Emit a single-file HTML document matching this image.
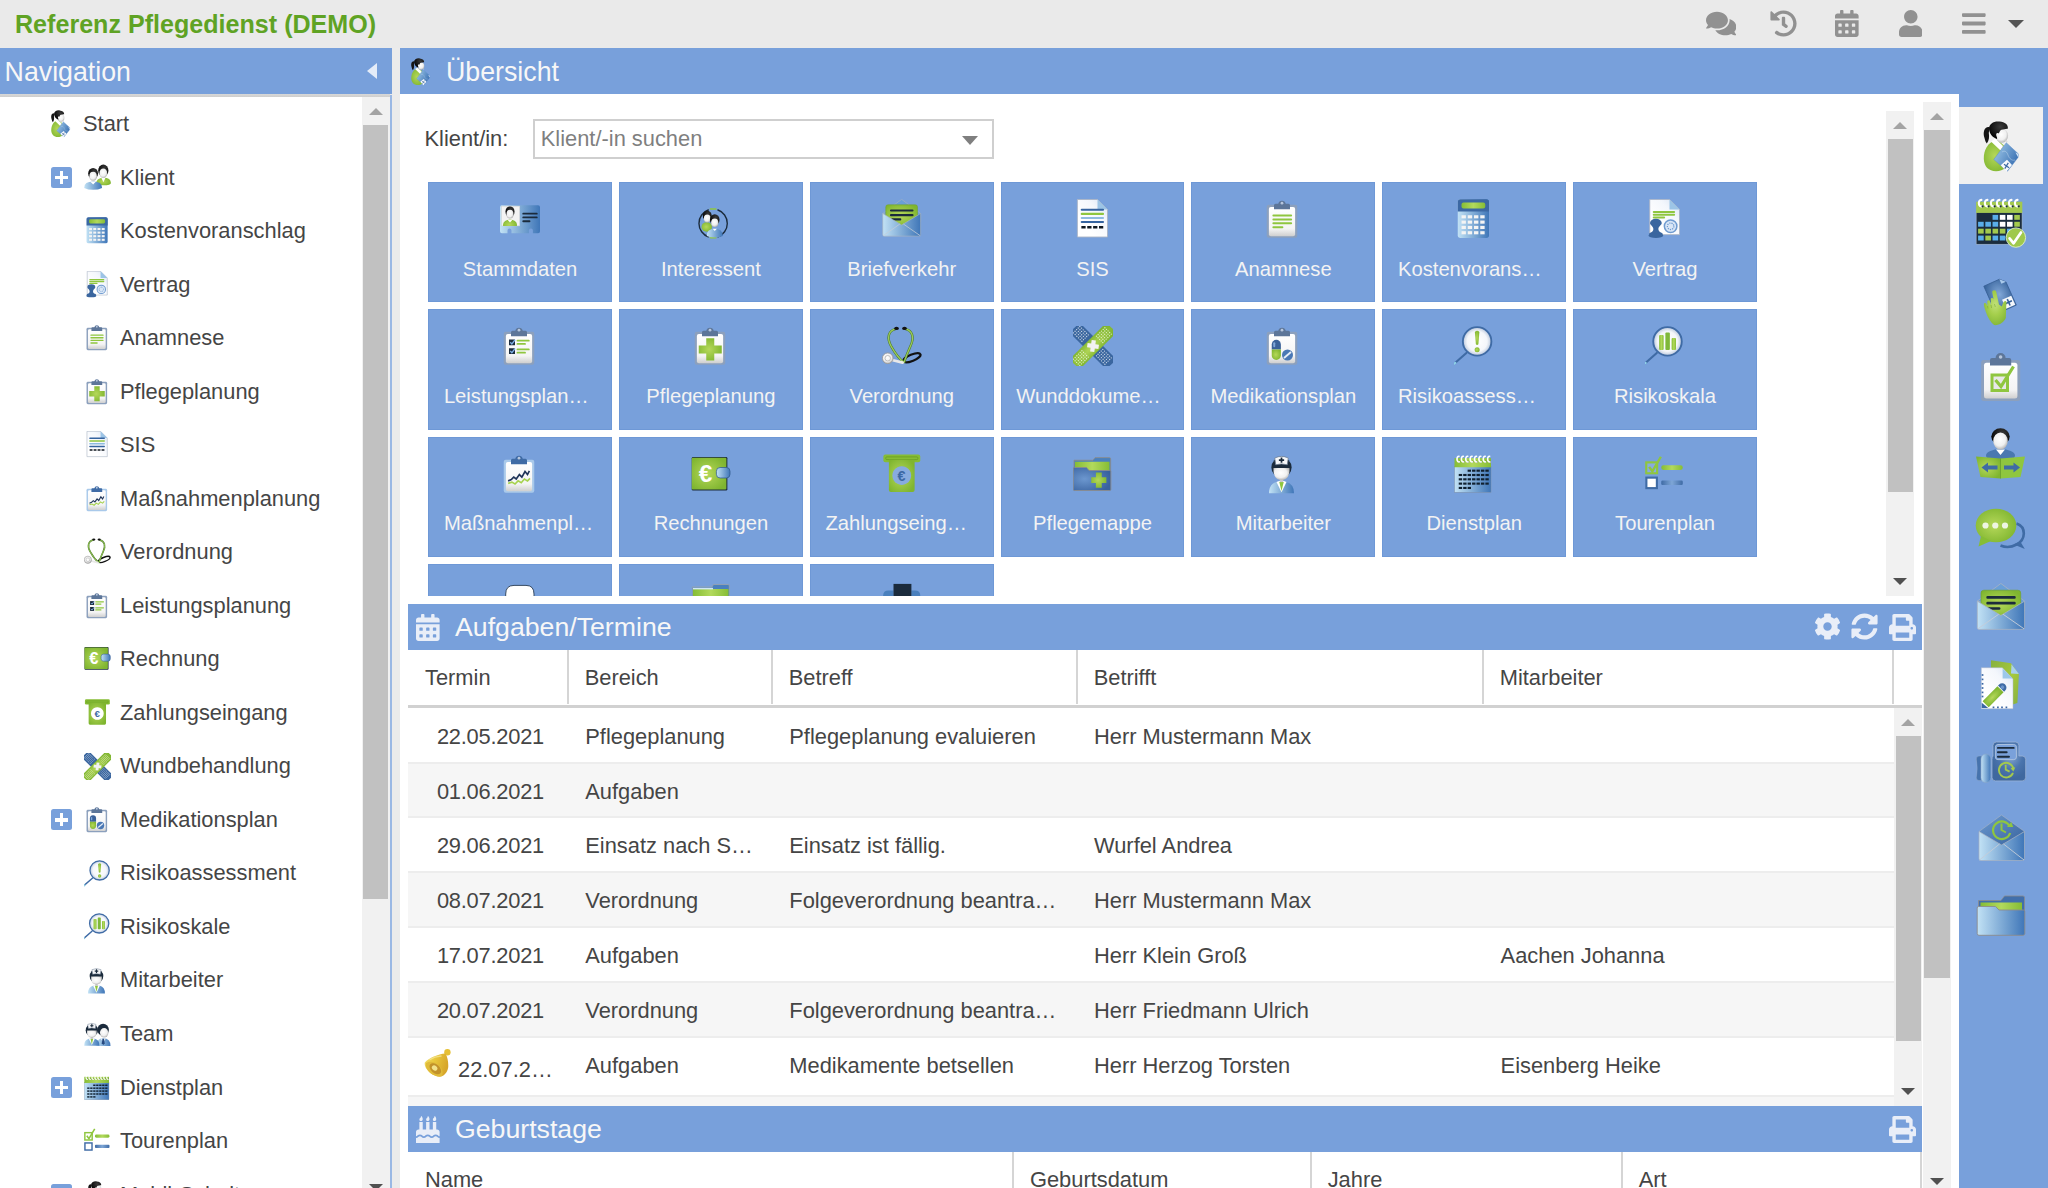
<!DOCTYPE html><html><head><meta charset="utf-8"><title>Referenz Pflegedienst</title><style>
*{box-sizing:border-box;margin:0;padding:0}
html,body{width:2048px;height:1188px;overflow:hidden;background:#ebebeb;font-family:"Liberation Sans",sans-serif;color:#454545;font-size:21.85px}
.abs{position:absolute}
#top{position:absolute;left:0;top:0;width:2048px;height:48px;background:#eaeaea}
#title{position:absolute;left:15px;top:7px;font-weight:bold;font-size:25.1px;line-height:34px;color:#5fa324;white-space:nowrap}
.hdr{position:absolute;background:#78a0db;color:#f7f7f7;font-size:26.75px;white-space:nowrap}
.hdr .t{position:absolute;top:0;line-height:49.4px}
#nav{position:absolute;left:0;top:94px;width:390px;height:1094px;background:#fff;overflow:hidden}
#navshadow{position:absolute;left:0;top:94px;width:390px;height:3px;background:linear-gradient(#d8d8d8,#cecece)}
.row{position:absolute;left:0;width:362px;height:53.53px}
.row .tx{position:absolute;top:0;line-height:54.2px;white-space:nowrap}
.row svg.ic{position:absolute;width:27px;height:27px}
.plus{position:absolute;left:51px;width:21px;height:21px;background:#78a0db;border-radius:2.5px}
.plus:before{content:"";position:absolute;left:3.9px;top:8.5px;width:13.2px;height:3.8px;background:#fff}
.plus:after{content:"";position:absolute;left:8.6px;top:3.8px;width:3.8px;height:13.2px;background:#fff}
.sb{position:absolute;background:#f1f1f1}
.sb .th{position:absolute;background:#c1c1c1}
.sb .up,.sb .dn{position:absolute;width:0;height:0;border-left:7px solid transparent;border-right:7px solid transparent}
.sb .up{border-bottom:7px solid #a3a3a3}
.sb .dn{border-top:7px solid #505050}
#main{position:absolute;left:400px;top:94px;width:1559px;height:1094px;background:#fff;overflow:hidden}
#tb{position:absolute;left:1959px;top:94px;width:89px;height:1094px;background:#78a0db}
.tile{position:absolute;width:183.8px;height:120.4px;background:#78a0db;border:1px solid #6e98d6;color:#f3f3f3;font-size:20.2px;text-align:center}
.tile svg{position:absolute;left:71px;top:16.2px;width:40px;height:40px}
.tile .l{position:absolute;left:0;width:182px;top:70.6px;line-height:30px;white-space:nowrap}
.sec{position:absolute;left:8px;width:1514px;height:46px;background:#78a0db;color:#f7f7f7;font-size:26.7px}
.sec .t{position:absolute;left:47px;top:0;line-height:47.4px;white-space:nowrap}
.th{position:absolute;white-space:nowrap}
.gh{position:absolute;left:8px;width:1514px;height:57.6px;background:#fff;border-bottom:3.6px solid #d1d1d1}
.gh .c{position:absolute;top:0;height:54px;line-height:55px;border-right:2px solid #d5d5d5;padding-left:17px;white-space:nowrap}
.gr{position:absolute;left:8px;width:1486px;height:54.83px;border-bottom:2px solid #ededed;background:#fff}
.gr.alt{background:#f6f6f6}
.gr .c{position:absolute;top:0;line-height:56px;white-space:nowrap}
</style></head><body><svg width="0" height="0" style="position:absolute"><defs>
<linearGradient id="gB" x1="0" y1="0" x2="1" y2="0"><stop offset="0" stop-color="#c2e2f5"/><stop offset="1" stop-color="#3f76b8"/></linearGradient>
<linearGradient id="gBd" x1="0" y1="0" x2="1" y2="1"><stop offset="0" stop-color="#6d9bd2"/><stop offset="1" stop-color="#345f99"/></linearGradient>
<linearGradient id="gP" x1="0" y1="0" x2="0" y2="1"><stop offset="0" stop-color="#ffffff"/><stop offset=".75" stop-color="#f4f4f4"/><stop offset="1" stop-color="#cfcfcf"/></linearGradient>
<linearGradient id="gD" x1="1" y1="0" x2=".3" y2=".75"><stop offset="0" stop-color="#d6e2f4"/><stop offset=".45" stop-color="#f4f7fc"/><stop offset="1" stop-color="#ffffff"/></linearGradient>
<radialGradient id="gG" cx=".45" cy=".5" r=".6"><stop offset="0" stop-color="#b5d85a"/><stop offset="1" stop-color="#7fb52f"/></radialGradient>
<linearGradient id="gGl" x1="0" y1="0" x2="1" y2="0"><stop offset="0" stop-color="#86bd35"/><stop offset=".5" stop-color="#b2d95c"/><stop offset="1" stop-color="#86bd35"/></linearGradient>
<radialGradient id="gF" cx=".45" cy=".4" r=".65"><stop offset="0" stop-color="#ffffff"/><stop offset=".6" stop-color="#f0f0f0"/><stop offset="1" stop-color="#a8a8a8"/></radialGradient>
<radialGradient id="gL" cx=".5" cy=".5" r=".5"><stop offset="0" stop-color="#ffffff"/><stop offset=".7" stop-color="#f4f6fa"/><stop offset="1" stop-color="#b9c7dc"/></radialGradient>
<radialGradient id="gH" cx=".6" cy=".3" r=".7"><stop offset="0" stop-color="#3a3a3a"/><stop offset="1" stop-color="#000"/></radialGradient>
<linearGradient id="gBv" x1="0" y1="0" x2="0" y2="1"><stop offset="0" stop-color="#8fc0e6"/><stop offset="1" stop-color="#3f76b8"/></linearGradient>
<radialGradient id="gGold" cx=".4" cy=".4" r=".7"><stop offset="0" stop-color="#ffe27a"/><stop offset=".6" stop-color="#e9b52a"/><stop offset="1" stop-color="#b98414"/></radialGradient>
</defs></svg>
<div id="top"><div id="title">Referenz Pflegedienst (DEMO)</div><svg style="position:absolute;left:1705.7px;top:9.7px;width:30.38px;height:27px" viewBox="0 0 576 512"><path fill="#919191" d="M416 192c0-88.400-93.100-160-208-160S0 103.600 0 192c0 34.300 14.100 65.900 38 92-13.400 30.200-35.500 54.200-35.800 54.500-2.200 2.300-2.800 5.700-1.500 8.700S4.800 352 8 352c36.600 0 66.900-12.300 88.700-25 32.200 15.700 70.300 25 111.300 25 114.900 0 208-71.600 208-160zm122 220c23.900-26 38-57.700 38-92 0-66.900-53.500-124.200-129.300-148.100.9 6.600 1.300 13.300 1.300 20.100 0 105.900-107.700 192-240 192-10.800 0-21.300-.8-31.700-1.900C207.800 439.600 281.800 480 368 480c41 0 79.100-9.200 111.300-25 21.800 12.700 52.100 25 88.700 25 3.200 0 6.100-1.900 7.300-4.800 1.300-2.900.7-6.300-1.500-8.700-.3-.3-22.400-24.200-35.800-54.500z"/></svg><svg style="position:absolute;left:1769.6px;top:9.7px;width:27.00px;height:27px" viewBox="0 0 512 512"><path fill="#919191" d="M504 255.531c.253 136.640-111.180 248.372-247.820 248.468-59.015.042-113.223-20.530-155.822-54.911-11.077-8.940-11.905-25.541-1.839-35.607l11.267-11.267c8.609-8.609 22.353-9.551 31.891-1.984C173.062 425.135 212.781 440 256 440c101.705 0 184-82.311 184-184 0-101.705-82.311-184-184-184-48.814 0-93.149 18.969-126.068 49.932l50.754 50.754c10.080 10.080 2.941 27.314-11.313 27.314H24c-8.837 0-16-7.163-16-16V38.627c0-14.254 17.234-21.393 27.314-11.314l49.372 49.372C129.209 34.136 189.552 8 256 8c136.810 0 247.747 110.780 248 247.531zm-180.912 78.784l9.823-12.630c8.138-10.463 6.253-25.542-4.210-33.679L288 256.349V152c0-13.255-10.745-24-24-24h-16c-13.255 0-24 10.745-24 24v135.651l65.409 50.874c10.463 8.137 25.541 6.253 33.679-4.210z"/></svg><svg style="position:absolute;left:1835.1px;top:9.9px;width:23.62px;height:27px" viewBox="0 0 448 512"><path fill="#919191" d="M0 464c0 26.500 21.500 48 48 48h352c26.500 0 48-21.500 48-48V192H0v272zm320-196c0-6.600 5.400-12 12-12h40c6.600 0 12 5.400 12 12v40c0 6.600-5.400 12-12 12h-40c-6.600 0-12-5.400-12-12v-40zm0 128c0-6.600 5.400-12 12-12h40c6.600 0 12 5.400 12 12v40c0 6.600-5.400 12-12 12h-40c-6.600 0-12-5.400-12-12v-40zM192 268c0-6.600 5.400-12 12-12h40c6.600 0 12 5.400 12 12v40c0 6.600-5.400 12-12 12h-40c-6.600 0-12-5.400-12-12v-40zm0 128c0-6.600 5.400-12 12-12h40c6.600 0 12 5.400 12 12v40c0 6.600-5.400 12-12 12h-40c-6.600 0-12-5.400-12-12v-40zM64 268c0-6.600 5.400-12 12-12h40c6.600 0 12 5.400 12 12v40c0 6.600-5.400 12-12 12H76c-6.600 0-12-5.400-12-12v-40zm0 128c0-6.600 5.400-12 12-12h40c6.600 0 12 5.400 12 12v40c0 6.600-5.400 12-12 12H76c-6.600 0-12-5.400-12-12v-40zM400 64h-48V16c0-8.800-7.200-16-16-16h-32c-8.800 0-16 7.200-16 16v48H160V16c0-8.800-7.200-16-16-16h-32c-8.800 0-16 7.200-16 16v48H48C21.500 64 0 85.500 0 112v48h448v-48c0-26.500-21.500-48-48-48z"/></svg><svg style="position:absolute;left:1898.6px;top:9.9px;width:23.62px;height:27px" viewBox="0 0 448 512"><path fill="#919191" d="M224 256c70.700 0 128-57.300 128-128S294.700 0 224 0 96 57.300 96 128s57.300 128 128 128zm89.600 32h-16.700c-22.200 10.200-46.900 16-72.900 16s-50.600-5.800-72.900-16h-16.700C60.200 288 0 348.200 0 422.400V464c0 26.500 21.500 48 48 48h352c26.500 0 48-21.500 48-48v-41.600c0-74.200-60.200-134.400-134.400-134.400z"/></svg><svg style="position:absolute;left:1962px;top:9.9px;width:23.62px;height:27px" viewBox="0 0 448 512"><path fill="#919191" d="M16 132h416c8.837 0 16-7.163 16-16V76c0-8.837-7.163-16-16-16H16C7.163 60 0 67.163 0 76v40c0 8.837 7.163 16 16 16zm0 160h416c8.837 0 16-7.163 16-16v-40c0-8.837-7.163-16-16-16H16c-8.837 0-16 7.163-16 16v40c0 8.837 7.163 16 16 16zm0 160h416c8.837 0 16-7.163 16-16v-40c0-8.837-7.163-16-16-16H16c-8.837 0-16 7.163-16 16v40c0 8.837 7.163 16 16 16z"/></svg><div class="abs" style="left:2007.8px;top:20.2px;width:0;height:0;border-left:8px solid transparent;border-right:8px solid transparent;border-top:8.700px solid #555"></div></div>
<div class="hdr" style="left:0;top:48px;width:391.5px;height:46px"><div class="t" style="left:4.6px">Navigation</div><div class="abs" style="left:367px;top:15px;width:0;height:0;border-top:8px solid transparent;border-bottom:8px solid transparent;border-right:10px solid #e4ecf8"></div></div>
<div class="hdr" style="left:400px;top:48px;width:1648px;height:46px"><svg class="" style="position:absolute;left:5.5px;top:9.3px;width:29px;height:29px" viewBox="0 0 54 54"><path d="M15.500 8C10.500 7 8.500 13 10.500 19C11.200 21.500 11.500 23 12.800 24.500C15 22 15.500 18 14.800 14z" fill="#151515"/><path d="M21 21.500C14 23.500 9.500 31 9.800 40C10.200 47.500 14.500 52.200 22 52.200C30 52.200 34.500 47 34.500 40C34.500 30 29 23 21 21.500z" fill="url(#gG)"/><path d="M17 22.500L21.500 19.500L29 27L26.500 31.500z" fill="#fff"/><path d="M26.500 31.500L29 27L31 28.500z" fill="#e6e6e6"/><ellipse cx="27.800" cy="16.800" rx="6.300" ry="7" fill="url(#gF)"/><path d="M31 21.500l3 .8-1.500 1.500z" fill="#ddd"/><path d="M15 10C15 4.500 20 2 25.500 2.600C31 3 34.500 6 33.800 9.800C32 9.500 30 10.500 27.500 10.800C26 11 25.800 13.500 24.500 14.500C23 13.500 21.800 14.500 22.300 16.500C22.600 17.800 23.500 18.500 23 20C20 19 15.500 16 15 10z" fill="url(#gH)"/><linearGradient id="gSd" x1="0" y1="0" x2="1" y2=".6"><stop offset="0" stop-color="#a7d0ee"/><stop offset="1" stop-color="#3a70b2"/></linearGradient><path d="M32.300 23.800L44.500 35L44 38.500L33.500 52.200L19.800 40.500z" fill="url(#gSd)" stroke="#5f8fca" stroke-width=".5"/><path d="M41.500 33.500l3 1.500-.5 3z" fill="#d5e6f6"/><path d="M26.700 46.300L33 40.800L38 46L32.500 52.600z" fill="#f7f9fc"/><path d="M30 45.200l5 3.500M34.300 43.800l-3.500 5.800" stroke="#3f6ba5" stroke-width="1.300"/><path d="M28 33C31 31 33 33 34 36C35.500 40 38 42 41 41" fill="none" stroke="#d5e6f6" stroke-width=".5" stroke-opacity=".8"/></svg><div class="t" style="left:46px">Übersicht</div></div>
<div id="nav">
<div class="row" style="top:3.00px"><svg class="ic" style="left:46.0px;top:12.4px;width:29px;height:29px" viewBox="0 0 54 54"><path d="M15.500 8C10.500 7 8.500 13 10.500 19C11.200 21.500 11.500 23 12.800 24.500C15 22 15.500 18 14.800 14z" fill="#151515"/><path d="M21 21.500C14 23.500 9.500 31 9.800 40C10.200 47.500 14.500 52.200 22 52.200C30 52.200 34.500 47 34.500 40C34.500 30 29 23 21 21.500z" fill="url(#gG)"/><path d="M17 22.500L21.500 19.500L29 27L26.500 31.500z" fill="#fff"/><path d="M26.500 31.500L29 27L31 28.500z" fill="#e6e6e6"/><ellipse cx="27.800" cy="16.800" rx="6.300" ry="7" fill="url(#gF)"/><path d="M31 21.500l3 .8-1.500 1.500z" fill="#ddd"/><path d="M15 10C15 4.500 20 2 25.500 2.600C31 3 34.500 6 33.800 9.800C32 9.500 30 10.500 27.500 10.800C26 11 25.800 13.500 24.500 14.500C23 13.500 21.800 14.500 22.300 16.500C22.600 17.800 23.500 18.500 23 20C20 19 15.500 16 15 10z" fill="url(#gH)"/><linearGradient id="gSd" x1="0" y1="0" x2="1" y2=".6"><stop offset="0" stop-color="#a7d0ee"/><stop offset="1" stop-color="#3a70b2"/></linearGradient><path d="M32.300 23.800L44.500 35L44 38.500L33.500 52.200L19.800 40.500z" fill="url(#gSd)" stroke="#5f8fca" stroke-width=".5"/><path d="M41.500 33.500l3 1.500-.5 3z" fill="#d5e6f6"/><path d="M26.700 46.300L33 40.800L38 46L32.500 52.600z" fill="#f7f9fc"/><path d="M30 45.200l5 3.500M34.300 43.800l-3.500 5.800" stroke="#3f6ba5" stroke-width="1.300"/><path d="M28 33C31 31 33 33 34 36C35.500 40 38 42 41 41" fill="none" stroke="#d5e6f6" stroke-width=".5" stroke-opacity=".8"/></svg><div class="tx" style="left:83px">Start</div></div>
<div class="row" style="top:56.53px"><div class="plus" style="top:16.5px"></div><svg class="ic" style="left:83.7px;top:13.2px" viewBox="0 0 32 32"><path d="M14.200 24.500Q14.200 16.300 23 16.300Q31.900 16.300 31.900 22.500Q31.900 25.300 23 25.300z" fill="url(#gG)"/><path d="M20.600 16.500L23 21.500L25.400 16.500z" fill="#fff"/><ellipse cx="22.9" cy="7.800000000000001" rx="6.05" ry="7.17" fill="url(#gH)"/><ellipse cx="22.9" cy="10.95" rx="4.64" ry="5.76" fill="url(#gF)"/><path d="M0.200 28.300Q0.200 20.800 10.800 20.800Q21.400 20.800 21.400 28.300Q17 30.600 10.800 30.600Q4.600 30.600 0.200 28.300z" fill="url(#gB)"/><path d="M7.600 21L10.800 24.300L14 21z" fill="#fff"/><ellipse cx="10.8" cy="11.2" rx="5.82" ry="6.50" fill="url(#gH)"/><ellipse cx="10.8" cy="14.54" rx="4.47" ry="5.22" fill="url(#gF)"/></svg><div class="tx" style="left:120px">Klient</div></div>
<div class="row" style="top:110.06px"><svg class="ic" style="left:83.7px;top:13.2px" viewBox="0 0 32 32"><rect x="3" y="0.2" width="25" height="31" rx="2.2" fill="url(#gB)"/><path d="M3 10V2.4q0-2.2 2.2-2.2h20.6q2.2 0 2.2 2.2V10z" fill="#3c68a3"/><rect x="6" y="2.8" width="19" height="4.8" rx="1.6" fill="url(#gGl)"/><rect x="6.0" y="13.00" width="3.5" height="2.5" fill="#f4f4f4"/><rect x="11.0" y="13.00" width="3.5" height="2.5" fill="#f4f4f4"/><rect x="16.0" y="13.00" width="3.5" height="2.5" fill="#f4f4f4"/><rect x="21.0" y="13.00" width="3.5" height="2.5" fill="#f4f4f4"/><rect x="6.0" y="17.25" width="3.5" height="2.5" fill="#f4f4f4"/><rect x="11.0" y="17.25" width="3.5" height="2.5" fill="#f4f4f4"/><rect x="16.0" y="17.25" width="3.5" height="2.5" fill="#f4f4f4"/><rect x="21.0" y="17.25" width="3.5" height="2.5" fill="#f4f4f4"/><rect x="6.0" y="21.50" width="3.5" height="2.5" fill="#f4f4f4"/><rect x="11.0" y="21.50" width="3.5" height="2.5" fill="#f4f4f4"/><rect x="16.0" y="21.50" width="3.5" height="2.5" fill="#f4f4f4"/><rect x="21.0" y="21.50" width="3.5" height="2.5" fill="#f4f4f4"/><rect x="6.0" y="25.75" width="3.5" height="2.5" fill="#f4f4f4"/><rect x="11.0" y="25.75" width="3.5" height="2.5" fill="#f4f4f4"/><rect x="16.0" y="25.75" width="3.5" height="2.5" fill="#f4f4f4"/><rect x="21.0" y="25.75" width="3.5" height="2.5" fill="#f4f4f4"/></svg><div class="tx" style="left:120px">Kostenvoranschlag</div></div>
<div class="row" style="top:163.59px"><svg class="ic" style="left:83.7px;top:13.2px" viewBox="0 0 32 32"><path d="M3.8 0.3H19.6L27.6 8.3V28.5H3.8z" fill="url(#gD)" stroke="#aab4c4" stroke-width=".7"/><path d="M19.6 0.3V8.3H27.6z" fill="#9cc4e6"/><path d="M7 10.3H23.3" stroke="#8fc63f" stroke-width="1.6" stroke-linecap="round"/><path d="M7 12.5H23.3" stroke="#8fc63f" stroke-width="1.6" stroke-linecap="round"/><path d="M7 14.7H15.3" stroke="#8fc63f" stroke-width="1.6" stroke-linecap="round"/><circle cx="20.5" cy="21.8" r="5" fill="#d9e6f6" stroke="#6f9bd0" stroke-width="1.2"/><circle cx="20.5" cy="21.8" r="2.6" fill="none" stroke="#6f9bd0" stroke-width="1" stroke-dasharray="1 .8"/><path d="M4 19.2a4.7 3.4 0 0 1 9.400 0c0 1.800-2.700 2.300-2.700 5c0 1.600 1.500 2.600 3.300 3.200v1.400H3.400v-1.400c1.800-.6 3.300-1.600 3.300-3.200c0-2.700-2.700-3.200-2.700-5z" fill="#3a669f"/><ellipse cx="8.700" cy="29.200" rx="5.900" ry="2" fill="#3a669f"/></svg><div class="tx" style="left:120px">Vertrag</div></div>
<div class="row" style="top:217.12px"><svg class="ic" style="left:83.7px;top:13.2px" viewBox="0 0 32 32"><rect x="3" y="4.5" width="24.4" height="26.5" rx="1.6" fill="#8ca0bd"/><rect x="4.7" y="6.3" width="21" height="23.4" rx="1.6" fill="url(#gP)"/><path d="M8.8 8.2V5q0-1.2 1.2-1.2h2.2a3.1 3.1 0 0 1 6 0h2.2q1.2 0 1.2 1.2V8.2z" fill="#5d7699"/><circle cx="15.2" cy="3.3" r="1.1" fill="#b7c6dc"/><path d="M8.3 13.2H22.5" stroke="#8fc63f" stroke-width="1.6" stroke-linecap="round"/><path d="M8.3 16.3H22.5" stroke="#8fc63f" stroke-width="1.6" stroke-linecap="round"/><path d="M8.3 19.4H22.5" stroke="#8fc63f" stroke-width="1.6" stroke-linecap="round"/><path d="M8.3 22.5H15.5" stroke="#8fc63f" stroke-width="1.6" stroke-linecap="round"/></svg><div class="tx" style="left:120px">Anamnese</div></div>
<div class="row" style="top:270.65px"><svg class="ic" style="left:83.7px;top:13.2px" viewBox="0 0 32 32"><rect x="3" y="4.5" width="24.4" height="26.5" rx="1.6" fill="#8ca0bd"/><rect x="4.7" y="6.3" width="21" height="23.4" rx="1.6" fill="url(#gP)"/><path d="M8.8 8.2V5q0-1.2 1.2-1.2h2.2a3.1 3.1 0 0 1 6 0h2.2q1.2 0 1.2 1.2V8.2z" fill="#5d7699"/><circle cx="15.2" cy="3.3" r="1.1" fill="#b7c6dc"/><path d="M12.2 9.8h6.4v5.7h6v6.4h-6v5.7h-6.4v-5.7h-6v-6.4h6z" fill="url(#gG)"/></svg><div class="tx" style="left:120px">Pflegeplanung</div></div>
<div class="row" style="top:324.18px"><svg class="ic" style="left:83.7px;top:13.2px" viewBox="0 0 32 32"><path d="M3.5 0.4H19.6L27.6 8.4V30.4H3.5z" fill="url(#gD)" stroke="#aab4c4" stroke-width=".7"/><path d="M19.6 0.4V8.4H27.6z" fill="#9cc4e6"/><path d="M7 8.6H24" stroke="#35639f" stroke-width="1.7" stroke-linecap="round"/><path d="M7 11.9H24" stroke="#8fc63f" stroke-width="1.7" stroke-linecap="round"/><path d="M7 15.2H24" stroke="#8ebbe0" stroke-width="1.7" stroke-linecap="round"/><path d="M7 18.4H24" stroke="#35639f" stroke-width="1.7" stroke-linecap="round"/><path d="M6.7 22.6h3.4M11.4 22.6h3.4M16.1 22.6h3.4M20.8 22.6h3.4" stroke="#101820" stroke-width="1.9"/></svg><div class="tx" style="left:120px">SIS</div></div>
<div class="row" style="top:377.71px"><svg class="ic" style="left:83.7px;top:13.2px" viewBox="0 0 32 32"><rect x="3" y="4.5" width="24.4" height="26.5" rx="1.6" fill="#a9c9ea"/><rect x="4.7" y="6.3" width="21" height="23.4" rx="1.6" fill="url(#gP)"/><path d="M8.8 8.2V5q0-1.2 1.2-1.2h2.2a3.1 3.1 0 0 1 6 0h2.2q1.2 0 1.2 1.2V8.2z" fill="#3f6ba5"/><circle cx="15.2" cy="3.3" r="1.1" fill="#b7c6dc"/><path d="M6.5 21.5l2.5-1 2-2 2 1.5 2.5-3.5 2 2 2.5-4.5 2 2.5 1.5-3" stroke="#1e3358" stroke-width="1.3" fill="none"/><path d="M6.5 23.5l3-1 2.5 1.5 2.5-2.5 2.5 1.5 2.5-3 2.5 1.5 2-2" stroke="#a6d24e" stroke-width="1.3" fill="none"/></svg><div class="tx" style="left:120px">Maßnahmenplanung</div></div>
<div class="row" style="top:431.24px"><svg class="ic" style="left:83.7px;top:13.2px" viewBox="0 0 32 32"><ellipse cx="24" cy="25.400" rx="7.300" ry="2.500" transform="rotate(-22 24 25.400)" fill="none" stroke="#111" stroke-width="1.700"/><path d="M11.200 2.300C5 3.500 3.500 9.500 7.500 16.500C10 21 13.500 26 17.600 29.300M18.400 2.300C24.600 3.500 26 9.500 22.800 16C21 20 19 25 17.600 29.300" fill="none" stroke="#4c7a2a" stroke-width="1.900"/><path d="M11.200 2.300C5 3.500 3.500 9.500 7.500 16.500C10 21 13.500 26 17.600 29.300M18.400 2.300C24.600 3.500 26 9.500 22.800 16C21 20 19 25 17.600 29.300" fill="none" stroke="#9ccc5a" stroke-width="1"/><ellipse cx="11.600" cy="1.900" rx="1.900" ry="1.300" fill="#111"/><ellipse cx="18" cy="1.900" rx="1.900" ry="1.300" fill="#111"/><path d="M8 27.200L16.500 29.300" stroke="#e8e8e8" stroke-width="2.200" stroke-linecap="round"/><circle cx="4.600" cy="25.800" r="4.300" fill="url(#gF)" stroke="#9a9a9a" stroke-width=".7"/><circle cx="4.600" cy="25.800" r="2.200" fill="none" stroke="#b5b5b5" stroke-width=".7"/></svg><div class="tx" style="left:120px">Verordnung</div></div>
<div class="row" style="top:484.77px"><svg class="ic" style="left:83.7px;top:13.2px" viewBox="0 0 32 32"><rect x="3" y="4.5" width="24.4" height="26.5" rx="1.6" fill="#8ca0bd"/><rect x="4.7" y="6.3" width="21" height="23.4" rx="1.6" fill="url(#gP)"/><path d="M8.8 8.2V5q0-1.2 1.2-1.2h2.2a3.1 3.1 0 0 1 6 0h2.2q1.2 0 1.2 1.2V8.2z" fill="#5d7699"/><circle cx="15.2" cy="3.3" r="1.1" fill="#b7c6dc"/><rect x="7.2" y="10.8" width="4.8" height="4.6" fill="#1b2b3c"/><rect x="7.2" y="17.8" width="4.8" height="4.6" fill="#1b2b3c"/><path d="M8.2 13l1.3 1.4 2.6-3.4" stroke="#7fb0e6" stroke-width="1" fill="none"/><path d="M8.2 20l1.3 1.4 2.6-3.4" stroke="#7fb0e6" stroke-width="1" fill="none"/><path d="M14 11.7H23" stroke="#8fc63f" stroke-width="1.5" stroke-linecap="round"/><path d="M14 14.3H20" stroke="#8fc63f" stroke-width="1.5" stroke-linecap="round"/><path d="M14 18.7H23" stroke="#8fc63f" stroke-width="1.5" stroke-linecap="round"/><path d="M14 21.3H20" stroke="#8fc63f" stroke-width="1.5" stroke-linecap="round"/></svg><div class="tx" style="left:120px">Leistungsplanung</div></div>
<div class="row" style="top:538.30px"><svg class="ic" style="left:83.7px;top:13.2px" viewBox="0 0 32 32"><rect x="0.600" y="2.300" width="28.500" height="26.900" rx="1" fill="#1b2b3c"/><rect x="0.600" y="3" width="27.700" height="25.400" rx=".8" fill="url(#gG)"/><rect x="20.300" y="10.800" width="10.900" height="8.400" rx="3" fill="url(#gB)" stroke="#2f588f" stroke-width=".6"/><text x="11.600" y="22.400" font-family="Liberation Sans" font-weight="bold" font-size="19.500" fill="#fff" text-anchor="middle">€</text></svg><div class="tx" style="left:120px">Rechnung</div></div>
<div class="row" style="top:591.83px"><svg class="ic" style="left:83.7px;top:13.2px" viewBox="0 0 32 32"><rect x="1.100" y="0.400" width="29.500" height="6.200" rx="1.600" fill="#86bd35"/><rect x="3" y="2.300" width="25.700" height="2.200" rx=".8" fill="none" stroke="#6a9e24" stroke-width=".7"/><path fill-rule="evenodd" d="M5.500 4.500H26.100V28.800Q26.100 30.400 24.500 30.400H7.100Q5.500 30.400 5.500 28.800zM15.800 9.700a7.500 7.500 0 1 0 .01 0z" fill="url(#gG)"/><circle cx="15.800" cy="17.200" r="7.500" fill="#fff" fill-opacity=".12"/><text x="15.500" y="21.300" font-family="Liberation Sans" font-weight="bold" font-size="11.500" fill="#3c68a3" text-anchor="middle">€</text></svg><div class="tx" style="left:120px">Zahlungseingang</div></div>
<div class="row" style="top:645.36px"><svg class="ic" style="left:83.7px;top:13.2px" viewBox="0 0 32 32"><g transform="rotate(45 16 16)"><rect x="-4.800" y="10.300" width="41.600" height="11.400" rx="4.600" fill="#3a669f"/><path d="M-2.5 12.4H8.5" stroke="#fff" stroke-opacity=".75" stroke-width="1" stroke-dasharray="0.010 1.900" stroke-linecap="round"/><path d="M23.5 12.4H34.5" stroke="#fff" stroke-opacity=".75" stroke-width="1" stroke-dasharray="0.010 1.900" stroke-linecap="round"/><path d="M-2.5 14.2H8.5" stroke="#fff" stroke-opacity=".75" stroke-width="1" stroke-dasharray="0.010 1.900" stroke-linecap="round"/><path d="M23.5 14.2H34.5" stroke="#fff" stroke-opacity=".75" stroke-width="1" stroke-dasharray="0.010 1.900" stroke-linecap="round"/><path d="M-2.5 16H8.5" stroke="#fff" stroke-opacity=".75" stroke-width="1" stroke-dasharray="0.010 1.900" stroke-linecap="round"/><path d="M23.5 16H34.5" stroke="#fff" stroke-opacity=".75" stroke-width="1" stroke-dasharray="0.010 1.900" stroke-linecap="round"/><path d="M-2.5 17.8H8.5" stroke="#fff" stroke-opacity=".75" stroke-width="1" stroke-dasharray="0.010 1.900" stroke-linecap="round"/><path d="M23.5 17.8H34.5" stroke="#fff" stroke-opacity=".75" stroke-width="1" stroke-dasharray="0.010 1.900" stroke-linecap="round"/><path d="M-2.5 19.6H8.5" stroke="#fff" stroke-opacity=".75" stroke-width="1" stroke-dasharray="0.010 1.900" stroke-linecap="round"/><path d="M23.5 19.6H34.5" stroke="#fff" stroke-opacity=".75" stroke-width="1" stroke-dasharray="0.010 1.900" stroke-linecap="round"/></g><g transform="rotate(-45 16 16)"><rect x="-4.800" y="10.300" width="41.600" height="11.400" rx="4.600" fill="url(#gG)"/><path d="M-2.5 12.4H8.5" stroke="#fff" stroke-opacity=".75" stroke-width="1" stroke-dasharray="0.010 1.900" stroke-linecap="round"/><path d="M23.5 12.4H34.5" stroke="#fff" stroke-opacity=".75" stroke-width="1" stroke-dasharray="0.010 1.900" stroke-linecap="round"/><path d="M-2.5 14.2H8.5" stroke="#fff" stroke-opacity=".75" stroke-width="1" stroke-dasharray="0.010 1.900" stroke-linecap="round"/><path d="M23.5 14.2H34.5" stroke="#fff" stroke-opacity=".75" stroke-width="1" stroke-dasharray="0.010 1.900" stroke-linecap="round"/><path d="M-2.5 16H8.5" stroke="#fff" stroke-opacity=".75" stroke-width="1" stroke-dasharray="0.010 1.900" stroke-linecap="round"/><path d="M23.5 16H34.5" stroke="#fff" stroke-opacity=".75" stroke-width="1" stroke-dasharray="0.010 1.900" stroke-linecap="round"/><path d="M-2.5 17.8H8.5" stroke="#fff" stroke-opacity=".75" stroke-width="1" stroke-dasharray="0.010 1.900" stroke-linecap="round"/><path d="M23.5 17.8H34.5" stroke="#fff" stroke-opacity=".75" stroke-width="1" stroke-dasharray="0.010 1.900" stroke-linecap="round"/><path d="M-2.5 19.6H8.5" stroke="#fff" stroke-opacity=".75" stroke-width="1" stroke-dasharray="0.010 1.900" stroke-linecap="round"/><path d="M23.5 19.6H34.5" stroke="#fff" stroke-opacity=".75" stroke-width="1" stroke-dasharray="0.010 1.900" stroke-linecap="round"/></g><path d="M14.300 11.400h3.400v2.900h2.900v3.400h-2.900v2.900h-3.400v-2.900h-2.900v-3.400h2.900z" fill="#f2f2f2" transform="rotate(8 16 16)"/></svg><div class="tx" style="left:120px">Wundbehandlung</div></div>
<div class="row" style="top:698.89px"><div class="plus" style="top:16.5px"></div><svg class="ic" style="left:83.7px;top:13.2px" viewBox="0 0 32 32"><rect x="3" y="4.5" width="24.4" height="26.5" rx="1.6" fill="#8ca0bd"/><rect x="4.7" y="6.3" width="21" height="23.4" rx="1.6" fill="url(#gP)"/><path d="M8.8 8.2V5q0-1.2 1.2-1.2h2.2a3.1 3.1 0 0 1 6 0h2.2q1.2 0 1.2 1.2V8.2z" fill="#5d7699"/><circle cx="15.2" cy="3.3" r="1.1" fill="#b7c6dc"/><path d="M7 18.8V14.7a3.65 3.65 0 0 1 7.3 0V18.8z" fill="#3a6199"/><path d="M7 18.8V23.5a3.65 3.65 0 0 0 7.3 0V18.8z" fill="url(#gG)"/><rect x="8.2" y="13" width="1.6" height="4" rx=".8" fill="#7fa6d8"/><circle cx="19.6" cy="23.2" r="4.4" fill="#4a78b5"/><path d="M16.8 25.6l5.6-4.8" stroke="#e6eef8" stroke-width="1.5"/></svg><div class="tx" style="left:120px">Medikationsplan</div></div>
<div class="row" style="top:752.42px"><svg class="ic" style="left:83.7px;top:13.2px" viewBox="0 0 32 32"><path d="M9.9 21.6L-0.6999999999999993 30.900000000000002" stroke="#3f6ba5" stroke-width="1.700" stroke-linecap="round"/><path d="M1.0 29.5L-0.6999999999999993 30.900000000000002" stroke="#8fd0e8" stroke-width="1.700" stroke-linecap="round"/><circle cx="18.5" cy="12.3" r="11.400" fill="url(#gL)" stroke="#3f6ba5" stroke-width="1.500"/><path d="M16.700 4.800Q18.500 2.800 20.300 4.800L19.500 14.600Q18.500 15.600 17.500 14.600z" fill="url(#gG)"/><circle cx="18.500" cy="19" r="2" fill="url(#gG)"/></svg><div class="tx" style="left:120px">Risikoassessment</div></div>
<div class="row" style="top:805.95px"><svg class="ic" style="left:83.7px;top:13.2px" viewBox="0 0 32 32"><path d="M9.4 21.6L-1.1999999999999993 30.900000000000002" stroke="#3f6ba5" stroke-width="1.700" stroke-linecap="round"/><path d="M0.5 29.5L-1.1999999999999993 30.900000000000002" stroke="#8fd0e8" stroke-width="1.700" stroke-linecap="round"/><circle cx="18" cy="12.3" r="11.400" fill="url(#gL)" stroke="#3f6ba5" stroke-width="1.500"/><rect x="11.300" y="7.200" width="3.600" height="12" rx=".8" fill="url(#gGl)"/><rect x="16.300" y="5.200" width="3.600" height="14" rx=".8" fill="#7fb83a"/><rect x="21.300" y="9.600" width="3.500" height="9.600" rx=".8" fill="url(#gGl)"/></svg><div class="tx" style="left:120px">Risikoskale</div></div>
<div class="row" style="top:859.48px"><svg class="ic" style="left:83.7px;top:13.2px" viewBox="0 0 32 32"><path d="M4.80 31.30Q4.80 24.00 10.80 22.30L14.80 21.80L18.80 22.30Q24.80 24.00 24.80 31.30z" fill="url(#gB)"/><path d="M10.80 22.30L14.80 30.50L18.80 22.30L16.80 21.50H12.80z" fill="#fff"/><path d="M13.00 22.30L14.80 29.50L16.60 22.30z" fill="#8fc63f"/><rect x="13.40" y="18.50" width="2.80" height="4.00" fill="#c9c9c9"/><ellipse cx="14.80" cy="10.80" rx="8.10" ry="8.30" fill="#1b2b3c"/><path d="M8.40 11.20H21.20Q21.60 20.80 14.80 20.80Q8.00 20.80 8.40 11.20z" fill="url(#gF)"/><path d="M9.40 3.20Q14.80 0.60 20.20 3.20L19.40 8.60Q14.80 7.20 10.20 8.60z" fill="#f6f7f9" stroke="#6f7f93" stroke-width="0.60"/><path d="M14.10 2.80h1.40v1.40h1.40v1.40h-1.40v1.40h-1.40v-1.40h-1.40v-1.40h1.40z" fill="#1b2b3c"/></svg><div class="tx" style="left:120px">Mitarbeiter</div></div>
<div class="row" style="top:913.01px"><svg class="ic" style="left:83.7px;top:13.2px" viewBox="0 0 32 32"><path d="M14.500 30.700Q14.500 22 22.800 21.300Q31.400 22 31.400 30.700z" fill="url(#gB)"/><path d="M19.800 21.800L22.800 27L25.800 21.800z" fill="#fff"/><path d="M21.800 22.300h2l.7 5.200-1.700 2.200-1.700-2.200z" fill="#274a80"/><ellipse cx="22.600" cy="11.600" rx="6.900" ry="7.200" fill="#1b2b3c"/><ellipse cx="23.900" cy="15.200" rx="5" ry="5.600" fill="url(#gF)"/><path d="M0.30 30.47Q0.30 23.90 5.70 22.37L9.30 21.92L12.90 22.37Q18.30 23.90 18.30 30.47z" fill="url(#gB)"/><path d="M5.70 22.37L9.30 29.75L12.90 22.37L11.10 21.65H7.50z" fill="#fff"/><path d="M7.68 22.37L9.30 28.85L10.92 22.37z" fill="#8fc63f"/><rect x="8.04" y="18.95" width="2.52" height="3.60" fill="#c9c9c9"/><ellipse cx="9.30" cy="12.02" rx="7.29" ry="7.47" fill="#1b2b3c"/><path d="M3.54 12.38H15.06Q15.42 21.02 9.30 21.02Q3.18 21.02 3.54 12.38z" fill="url(#gF)"/><path d="M4.44 5.18Q9.30 2.84 14.16 5.18L13.44 10.04Q9.30 8.78 5.16 10.04z" fill="#f6f7f9" stroke="#6f7f93" stroke-width="0.54"/><path d="M8.67 4.82h1.26v1.26h1.26v1.26h-1.26v1.26h-1.26v-1.26h-1.26v-1.26h1.26z" fill="#1b2b3c"/></svg><div class="tx" style="left:120px">Team</div></div>
<div class="row" style="top:966.54px"><div class="plus" style="top:16.5px"></div><svg class="ic" style="left:83.7px;top:13.2px" viewBox="0 0 32 32"><rect x="0.400" y="10" width="29.200" height="20.600" fill="url(#gB)" stroke="#7d8ea5" stroke-width=".4"/><rect x="0.400" y="3.300" width="29.200" height="7.300" fill="url(#gGl)"/><circle cx="4.30" cy="6.200" r=".75" fill="#2d4a16"/><path d="M4.30 6.300C2.00 7 1.70 1.700 4.00 1.800" stroke="#fff" stroke-width="1.300" fill="none" stroke-linecap="round"/><circle cx="7.80" cy="6.200" r=".75" fill="#2d4a16"/><path d="M7.80 6.300C5.50 7 5.20 1.700 7.50 1.800" stroke="#fff" stroke-width="1.300" fill="none" stroke-linecap="round"/><circle cx="11.30" cy="6.200" r=".75" fill="#2d4a16"/><path d="M11.30 6.300C9.00 7 8.70 1.700 11.00 1.800" stroke="#fff" stroke-width="1.300" fill="none" stroke-linecap="round"/><circle cx="14.80" cy="6.200" r=".75" fill="#2d4a16"/><path d="M14.80 6.300C12.50 7 12.20 1.700 14.50 1.800" stroke="#fff" stroke-width="1.300" fill="none" stroke-linecap="round"/><circle cx="18.30" cy="6.200" r=".75" fill="#2d4a16"/><path d="M18.30 6.300C16.00 7 15.70 1.700 18.00 1.800" stroke="#fff" stroke-width="1.300" fill="none" stroke-linecap="round"/><circle cx="21.80" cy="6.200" r=".75" fill="#2d4a16"/><path d="M21.80 6.300C19.50 7 19.20 1.700 21.50 1.800" stroke="#fff" stroke-width="1.300" fill="none" stroke-linecap="round"/><circle cx="25.30" cy="6.200" r=".75" fill="#2d4a16"/><path d="M25.30 6.300C23.00 7 22.70 1.700 25.00 1.800" stroke="#fff" stroke-width="1.300" fill="none" stroke-linecap="round"/><circle cx="28.80" cy="6.200" r=".75" fill="#2d4a16"/><path d="M28.80 6.300C26.50 7 26.20 1.700 28.50 1.800" stroke="#fff" stroke-width="1.300" fill="none" stroke-linecap="round"/><rect x="10.90" y="12.50" width="2.700" height="1.700" fill="#10202f"/><rect x="14.45" y="12.50" width="2.700" height="1.700" fill="#10202f"/><rect x="18.00" y="12.50" width="2.700" height="1.700" fill="#10202f"/><rect x="21.55" y="12.50" width="2.700" height="1.700" fill="#10202f"/><rect x="25.10" y="12.50" width="2.700" height="1.700" fill="#10202f"/><rect x="3.80" y="15.95" width="2.700" height="1.700" fill="#10202f"/><rect x="7.35" y="15.95" width="2.700" height="1.700" fill="#10202f"/><rect x="10.90" y="15.95" width="2.700" height="1.700" fill="#10202f"/><rect x="14.45" y="15.95" width="2.700" height="1.700" fill="#10202f"/><rect x="18.00" y="15.95" width="2.700" height="1.700" fill="#10202f"/><rect x="21.55" y="15.95" width="2.700" height="1.700" fill="#10202f"/><rect x="25.10" y="15.95" width="2.700" height="1.700" fill="#10202f"/><rect x="3.80" y="19.40" width="2.700" height="1.700" fill="#10202f"/><rect x="7.35" y="19.40" width="2.700" height="1.700" fill="#10202f"/><rect x="10.90" y="19.40" width="2.700" height="1.700" fill="#10202f"/><rect x="14.45" y="19.40" width="2.700" height="1.700" fill="#10202f"/><rect x="18.00" y="19.40" width="2.700" height="1.700" fill="#10202f"/><rect x="21.55" y="19.40" width="2.700" height="1.700" fill="#10202f"/><rect x="25.10" y="19.40" width="2.700" height="1.700" fill="#10202f"/><rect x="3.80" y="22.85" width="2.700" height="1.700" fill="#10202f"/><rect x="7.35" y="22.85" width="2.700" height="1.700" fill="#10202f"/><rect x="10.90" y="22.85" width="2.700" height="1.700" fill="#10202f"/><rect x="14.45" y="22.85" width="2.700" height="1.700" fill="#10202f"/><rect x="18.00" y="22.85" width="2.700" height="1.700" fill="#10202f"/><rect x="21.55" y="22.85" width="2.700" height="1.700" fill="#10202f"/><rect x="25.10" y="22.85" width="2.700" height="1.700" fill="#10202f"/><rect x="3.80" y="26.30" width="2.700" height="1.700" fill="#10202f"/><rect x="7.35" y="26.30" width="2.700" height="1.700" fill="#10202f"/><rect x="10.90" y="26.30" width="2.700" height="1.700" fill="#10202f"/></svg><div class="tx" style="left:120px">Dienstplan</div></div>
<div class="row" style="top:1020.07px"><svg class="ic" style="left:83.7px;top:13.2px" viewBox="0 0 32 32"><rect x="1" y="6.700" width="8.700" height="8.700" fill="#fff" fill-opacity=".12" stroke="#8fc63f" stroke-width="1.700"/><path d="M3.300 10.300L5.900 13.800L12.700 2.200" stroke="#8fc63f" stroke-width="1.900" fill="none"/><rect x="13" y="9" width="17.200" height="3.700" rx="1.700" fill="url(#gGl)"/><rect x="1.100" y="18.900" width="8.400" height="8.400" fill="#fff" stroke="#3f6ba5" stroke-width="1.700"/><linearGradient id="gTb" x1="0" y1="0" x2="1" y2="0"><stop offset="0" stop-color="#3f6ba5"/><stop offset=".5" stop-color="#7ea6d6"/><stop offset="1" stop-color="#3f6ba5"/></linearGradient><rect x="13" y="21.100" width="17.200" height="3.700" rx="1" fill="url(#gTb)"/></svg><div class="tx" style="left:120px">Tourenplan</div></div>
<div class="row" style="top:1073.60px"><div class="plus" style="top:16.5px"></div><svg class="ic" style="left:83.2px;top:12.4px;width:29px;height:29px" viewBox="0 0 54 54"><path d="M15.500 8C10.500 7 8.500 13 10.500 19C11.200 21.500 11.500 23 12.800 24.500C15 22 15.500 18 14.800 14z" fill="#151515"/><path d="M21 21.500C14 23.500 9.500 31 9.800 40C10.200 47.500 14.500 52.200 22 52.200C30 52.200 34.500 47 34.500 40C34.500 30 29 23 21 21.500z" fill="url(#gG)"/><path d="M17 22.500L21.500 19.500L29 27L26.500 31.500z" fill="#fff"/><path d="M26.500 31.500L29 27L31 28.500z" fill="#e6e6e6"/><ellipse cx="27.800" cy="16.800" rx="6.300" ry="7" fill="url(#gF)"/><path d="M31 21.500l3 .8-1.500 1.500z" fill="#ddd"/><path d="M15 10C15 4.500 20 2 25.500 2.600C31 3 34.500 6 33.800 9.800C32 9.500 30 10.500 27.500 10.800C26 11 25.800 13.500 24.500 14.500C23 13.500 21.800 14.500 22.300 16.500C22.600 17.800 23.500 18.500 23 20C20 19 15.500 16 15 10z" fill="url(#gH)"/><linearGradient id="gSd" x1="0" y1="0" x2="1" y2=".6"><stop offset="0" stop-color="#a7d0ee"/><stop offset="1" stop-color="#3a70b2"/></linearGradient><path d="M32.300 23.800L44.500 35L44 38.500L33.500 52.200L19.800 40.500z" fill="url(#gSd)" stroke="#5f8fca" stroke-width=".5"/><path d="M41.500 33.500l3 1.500-.5 3z" fill="#d5e6f6"/><path d="M26.700 46.300L33 40.800L38 46L32.500 52.600z" fill="#f7f9fc"/><path d="M30 45.200l5 3.500M34.300 43.800l-3.500 5.800" stroke="#3f6ba5" stroke-width="1.300"/><path d="M28 33C31 31 33 33 34 36C35.500 40 38 42 41 41" fill="none" stroke="#d5e6f6" stroke-width=".5" stroke-opacity=".8"/></svg><div class="tx" style="left:120px">Mobil-Schalter</div></div>
<div class="sb" style="left:362px;top:3px;width:28px;height:1091px"><div class="up" style="left:7px;top:11px"></div><div class="th" style="left:1px;top:28px;width:25px;height:773.5px"></div><div class="dn" style="left:7px;top:1087px"></div></div>
</div>
<div id="navshadow"></div>
<div class="abs" style="left:390px;top:95px;width:2px;height:1093px;background:#9ab8e4"></div>
<div id="main">
<div class="abs" style="left:24.5px;top:25px;line-height:40px;white-space:nowrap">Klient/in:</div>
<div class="abs" style="left:133.3px;top:24.5px;width:460.7px;height:40px;border:2px solid #cfcfcf;background:#fff"><div class="abs" style="left:5.5px;top:0.5px;line-height:36px;color:#7f7f7f;white-space:nowrap">Klient/-in suchen</div><div class="abs" style="left:427px;top:15px;width:0;height:0;border-left:8.5px solid transparent;border-right:8.5px solid transparent;border-top:9px solid #7f7f7f"></div></div>
<div class="abs" style="left:0;top:0;width:1487px;height:501.5px;overflow:hidden">
<div class="tile" style="left:28.1px;top:88.0px"><svg class="" style="" viewBox="0 0 32 32"><path d="M1.5 5H30.5Q32 5 32 6.5V25.8Q32 27.3 30.5 27.3H26.3V25.2Q26.3 23.6 24.7 23.6Q23.1 23.6 23.1 25.2V27.3H9.2V25.2Q9.2 23.6 7.6 23.6Q6 23.6 6 25.2V27.3H1.5Q0 27.3 0 25.8V6.5Q0 5 1.5 5z" fill="url(#gB)"/><rect x="1.2" y="5.7" width="14.6" height="15.8" fill="#f3f3f3" stroke="#d0d0d0" stroke-width=".4"/><clipPath id="cpS"><rect x="1.2" y="5.7" width="14.6" height="15.8"/></clipPath><g clip-path="url(#cpS)"><ellipse cx="8" cy="20.6" rx="5.6" ry="4.2" fill="url(#gG)"/><path d="M6 16.6l2 2.2 2-2.2z" fill="#fff"/><ellipse cx="8" cy="10.1" rx="3.63" ry="4.29" fill="url(#gH)"/><ellipse cx="8" cy="12.10" rx="2.84" ry="3.51" fill="url(#gF)"/></g><path d="M18.6 11.7H29.4M18.6 14.7H29.4M18.6 17.8H23.6" stroke="#1b2b3c" stroke-width="1.5" stroke-linecap="round"/></svg><div class="l">Stammdaten</div></div>
<div class="tile" style="left:218.92px;top:88.0px"><svg class="" style="" viewBox="0 0 32 32"><path d="M14.2 8.6A11.5 11.5 0 0 0 14.2 30.4M21.2 8.6A11.5 11.5 0 0 1 21.2 30.4" fill="none" stroke="#1b2b3c" stroke-width="1.1"/><path d="M15.5 8h4.4M15.5 31h4.4" stroke="#8fc63f" stroke-width="1.3" stroke-linecap="round"/><ellipse cx="12.6" cy="22.3" rx="4.2" ry="3.8" fill="url(#gG)"/><ellipse cx="13" cy="13.4" rx="3.58" ry="3.92" fill="url(#gH)"/><ellipse cx="13" cy="15.63" rx="2.75" ry="3.15" fill="url(#gF)"/><path d="M12.6 29.5q0-5.800 6.400-5.800q6.400 0 6.400 5.800q-3 1.300-6.400 1.300q-3.400 0-6.400-1.300z" fill="url(#gB)"/><path d="M17.300 23.800l1.700 1.800 1.700-1.800z" fill="#fff"/><ellipse cx="19" cy="16.5" rx="3.81" ry="4.26" fill="url(#gH)"/><ellipse cx="19" cy="18.98" rx="2.92" ry="3.42" fill="url(#gF)"/></svg><div class="l">Interessent</div></div>
<div class="tile" style="left:409.74px;top:88.0px"><svg class="" style="" viewBox="0 0 32 32"><path d="M0.600 11.600L15.700 0.300L30.900 11.600V18z" fill="#6a9fd8" stroke="#a9b3c2" stroke-width=".5"/><rect x="3" y="4.600" width="25.400" height="17" rx="1.800" fill="url(#gG)" stroke="#6f9f2c" stroke-width=".4"/><path d="M7.200 9.200H24.400M7.200 12.900H24.400M8 16.300H14.600" stroke="#1b2b3c" stroke-width="1.700" stroke-linecap="round"/><path d="M0.600 11.600L15.700 20.800L30.900 11.600V28.500Q30.900 29.700 29.700 29.700H1.800Q0.600 29.700 0.600 28.500z" fill="url(#gB)" stroke="#a9b3c2" stroke-width=".5"/><path d="M1 29.300L14.300 20M30.500 29.300L17.100 20" stroke="#c4cdd8" stroke-width=".6" fill="none"/></svg><div class="l">Briefverkehr</div></div>
<div class="tile" style="left:600.5600000000001px;top:88.0px"><svg class="" style="" viewBox="0 0 32 32"><path d="M3.5 0.4H19.6L27.6 8.4V30.4H3.5z" fill="url(#gD)" stroke="#aab4c4" stroke-width=".7"/><path d="M19.6 0.4V8.4H27.6z" fill="#9cc4e6"/><path d="M7 8.6H24" stroke="#35639f" stroke-width="1.7" stroke-linecap="round"/><path d="M7 11.9H24" stroke="#8fc63f" stroke-width="1.7" stroke-linecap="round"/><path d="M7 15.2H24" stroke="#8ebbe0" stroke-width="1.7" stroke-linecap="round"/><path d="M7 18.4H24" stroke="#35639f" stroke-width="1.7" stroke-linecap="round"/><path d="M6.7 22.6h3.4M11.4 22.6h3.4M16.1 22.6h3.4M20.8 22.6h3.4" stroke="#101820" stroke-width="1.9"/></svg><div class="l">SIS</div></div>
<div class="tile" style="left:791.38px;top:88.0px"><svg class="" style="" viewBox="0 0 32 32"><rect x="3" y="4.5" width="24.4" height="26.5" rx="1.6" fill="#8ca0bd"/><rect x="4.7" y="6.3" width="21" height="23.4" rx="1.6" fill="url(#gP)"/><path d="M8.8 8.2V5q0-1.2 1.2-1.2h2.2a3.1 3.1 0 0 1 6 0h2.2q1.2 0 1.2 1.2V8.2z" fill="#5d7699"/><circle cx="15.2" cy="3.3" r="1.1" fill="#b7c6dc"/><path d="M8.3 13.2H22.5" stroke="#8fc63f" stroke-width="1.6" stroke-linecap="round"/><path d="M8.3 16.3H22.5" stroke="#8fc63f" stroke-width="1.6" stroke-linecap="round"/><path d="M8.3 19.4H22.5" stroke="#8fc63f" stroke-width="1.6" stroke-linecap="round"/><path d="M8.3 22.5H15.5" stroke="#8fc63f" stroke-width="1.6" stroke-linecap="round"/></svg><div class="l">Anamnese</div></div>
<div class="tile" style="left:982.1999999999999px;top:88.0px"><svg class="" style="" viewBox="0 0 32 32"><rect x="3" y="0.2" width="25" height="31" rx="2.2" fill="url(#gB)"/><path d="M3 10V2.4q0-2.2 2.2-2.2h20.6q2.2 0 2.2 2.2V10z" fill="#3c68a3"/><rect x="6" y="2.8" width="19" height="4.8" rx="1.6" fill="url(#gGl)"/><rect x="6.0" y="13.00" width="3.5" height="2.5" fill="#f4f4f4"/><rect x="11.0" y="13.00" width="3.5" height="2.5" fill="#f4f4f4"/><rect x="16.0" y="13.00" width="3.5" height="2.5" fill="#f4f4f4"/><rect x="21.0" y="13.00" width="3.5" height="2.5" fill="#f4f4f4"/><rect x="6.0" y="17.25" width="3.5" height="2.5" fill="#f4f4f4"/><rect x="11.0" y="17.25" width="3.5" height="2.5" fill="#f4f4f4"/><rect x="16.0" y="17.25" width="3.5" height="2.5" fill="#f4f4f4"/><rect x="21.0" y="17.25" width="3.5" height="2.5" fill="#f4f4f4"/><rect x="6.0" y="21.50" width="3.5" height="2.5" fill="#f4f4f4"/><rect x="11.0" y="21.50" width="3.5" height="2.5" fill="#f4f4f4"/><rect x="16.0" y="21.50" width="3.5" height="2.5" fill="#f4f4f4"/><rect x="21.0" y="21.50" width="3.5" height="2.5" fill="#f4f4f4"/><rect x="6.0" y="25.75" width="3.5" height="2.5" fill="#f4f4f4"/><rect x="11.0" y="25.75" width="3.5" height="2.5" fill="#f4f4f4"/><rect x="16.0" y="25.75" width="3.5" height="2.5" fill="#f4f4f4"/><rect x="21.0" y="25.75" width="3.5" height="2.5" fill="#f4f4f4"/></svg><div class="l" style="text-align:left;padding-left:14.8px">Kostenvorans…</div></div>
<div class="tile" style="left:1173.02px;top:88.0px"><svg class="" style="" viewBox="0 0 32 32"><path d="M3.8 0.3H19.6L27.6 8.3V28.5H3.8z" fill="url(#gD)" stroke="#aab4c4" stroke-width=".7"/><path d="M19.6 0.3V8.3H27.6z" fill="#9cc4e6"/><path d="M7 10.3H23.3" stroke="#8fc63f" stroke-width="1.6" stroke-linecap="round"/><path d="M7 12.5H23.3" stroke="#8fc63f" stroke-width="1.6" stroke-linecap="round"/><path d="M7 14.7H15.3" stroke="#8fc63f" stroke-width="1.6" stroke-linecap="round"/><circle cx="20.5" cy="21.8" r="5" fill="#d9e6f6" stroke="#6f9bd0" stroke-width="1.2"/><circle cx="20.5" cy="21.8" r="2.6" fill="none" stroke="#6f9bd0" stroke-width="1" stroke-dasharray="1 .8"/><path d="M4 19.2a4.7 3.4 0 0 1 9.400 0c0 1.800-2.700 2.300-2.700 5c0 1.600 1.500 2.600 3.300 3.200v1.400H3.400v-1.400c1.800-.6 3.300-1.600 3.300-3.200c0-2.700-2.700-3.200-2.700-5z" fill="#3a669f"/><ellipse cx="8.700" cy="29.200" rx="5.900" ry="2" fill="#3a669f"/></svg><div class="l">Vertrag</div></div>
<div class="tile" style="left:28.1px;top:215.3px"><svg class="" style="" viewBox="0 0 32 32"><rect x="3" y="4.5" width="24.4" height="26.5" rx="1.6" fill="#8ca0bd"/><rect x="4.7" y="6.3" width="21" height="23.4" rx="1.6" fill="url(#gP)"/><path d="M8.8 8.2V5q0-1.2 1.2-1.2h2.2a3.1 3.1 0 0 1 6 0h2.2q1.2 0 1.2 1.2V8.2z" fill="#5d7699"/><circle cx="15.2" cy="3.3" r="1.1" fill="#b7c6dc"/><rect x="7.2" y="10.8" width="4.8" height="4.6" fill="#1b2b3c"/><rect x="7.2" y="17.8" width="4.8" height="4.6" fill="#1b2b3c"/><path d="M8.2 13l1.3 1.4 2.6-3.4" stroke="#7fb0e6" stroke-width="1" fill="none"/><path d="M8.2 20l1.3 1.4 2.6-3.4" stroke="#7fb0e6" stroke-width="1" fill="none"/><path d="M14 11.7H23" stroke="#8fc63f" stroke-width="1.5" stroke-linecap="round"/><path d="M14 14.3H20" stroke="#8fc63f" stroke-width="1.5" stroke-linecap="round"/><path d="M14 18.7H23" stroke="#8fc63f" stroke-width="1.5" stroke-linecap="round"/><path d="M14 21.3H20" stroke="#8fc63f" stroke-width="1.5" stroke-linecap="round"/></svg><div class="l" style="text-align:left;padding-left:14.8px">Leistungsplan…</div></div>
<div class="tile" style="left:218.92px;top:215.3px"><svg class="" style="" viewBox="0 0 32 32"><rect x="3" y="4.5" width="24.4" height="26.5" rx="1.6" fill="#8ca0bd"/><rect x="4.7" y="6.3" width="21" height="23.4" rx="1.6" fill="url(#gP)"/><path d="M8.8 8.2V5q0-1.2 1.2-1.2h2.2a3.1 3.1 0 0 1 6 0h2.2q1.2 0 1.2 1.2V8.2z" fill="#5d7699"/><circle cx="15.2" cy="3.3" r="1.1" fill="#b7c6dc"/><path d="M12.2 9.8h6.4v5.7h6v6.4h-6v5.7h-6.4v-5.7h-6v-6.4h6z" fill="url(#gG)"/></svg><div class="l">Pflegeplanung</div></div>
<div class="tile" style="left:409.74px;top:215.3px"><svg class="" style="" viewBox="0 0 32 32"><ellipse cx="24" cy="25.400" rx="7.300" ry="2.500" transform="rotate(-22 24 25.400)" fill="none" stroke="#111" stroke-width="1.700"/><path d="M11.200 2.300C5 3.500 3.500 9.500 7.500 16.500C10 21 13.500 26 17.600 29.300M18.400 2.300C24.600 3.500 26 9.500 22.800 16C21 20 19 25 17.600 29.300" fill="none" stroke="#4c7a2a" stroke-width="1.900"/><path d="M11.200 2.300C5 3.500 3.500 9.500 7.500 16.500C10 21 13.500 26 17.600 29.300M18.400 2.300C24.600 3.500 26 9.500 22.800 16C21 20 19 25 17.600 29.300" fill="none" stroke="#9ccc5a" stroke-width="1"/><ellipse cx="11.600" cy="1.900" rx="1.900" ry="1.300" fill="#111"/><ellipse cx="18" cy="1.900" rx="1.900" ry="1.300" fill="#111"/><path d="M8 27.200L16.500 29.300" stroke="#e8e8e8" stroke-width="2.200" stroke-linecap="round"/><circle cx="4.600" cy="25.800" r="4.300" fill="url(#gF)" stroke="#9a9a9a" stroke-width=".7"/><circle cx="4.600" cy="25.800" r="2.200" fill="none" stroke="#b5b5b5" stroke-width=".7"/></svg><div class="l">Verordnung</div></div>
<div class="tile" style="left:600.5600000000001px;top:215.3px"><svg class="" style="" viewBox="0 0 32 32"><g transform="rotate(45 16 16)"><rect x="-4.800" y="10.300" width="41.600" height="11.400" rx="4.600" fill="#3a669f"/><path d="M-2.5 12.4H8.5" stroke="#fff" stroke-opacity=".75" stroke-width="1" stroke-dasharray="0.010 1.900" stroke-linecap="round"/><path d="M23.5 12.4H34.5" stroke="#fff" stroke-opacity=".75" stroke-width="1" stroke-dasharray="0.010 1.900" stroke-linecap="round"/><path d="M-2.5 14.2H8.5" stroke="#fff" stroke-opacity=".75" stroke-width="1" stroke-dasharray="0.010 1.900" stroke-linecap="round"/><path d="M23.5 14.2H34.5" stroke="#fff" stroke-opacity=".75" stroke-width="1" stroke-dasharray="0.010 1.900" stroke-linecap="round"/><path d="M-2.5 16H8.5" stroke="#fff" stroke-opacity=".75" stroke-width="1" stroke-dasharray="0.010 1.900" stroke-linecap="round"/><path d="M23.5 16H34.5" stroke="#fff" stroke-opacity=".75" stroke-width="1" stroke-dasharray="0.010 1.900" stroke-linecap="round"/><path d="M-2.5 17.8H8.5" stroke="#fff" stroke-opacity=".75" stroke-width="1" stroke-dasharray="0.010 1.900" stroke-linecap="round"/><path d="M23.5 17.8H34.5" stroke="#fff" stroke-opacity=".75" stroke-width="1" stroke-dasharray="0.010 1.900" stroke-linecap="round"/><path d="M-2.5 19.6H8.5" stroke="#fff" stroke-opacity=".75" stroke-width="1" stroke-dasharray="0.010 1.900" stroke-linecap="round"/><path d="M23.5 19.6H34.5" stroke="#fff" stroke-opacity=".75" stroke-width="1" stroke-dasharray="0.010 1.900" stroke-linecap="round"/></g><g transform="rotate(-45 16 16)"><rect x="-4.800" y="10.300" width="41.600" height="11.400" rx="4.600" fill="url(#gG)"/><path d="M-2.5 12.4H8.5" stroke="#fff" stroke-opacity=".75" stroke-width="1" stroke-dasharray="0.010 1.900" stroke-linecap="round"/><path d="M23.5 12.4H34.5" stroke="#fff" stroke-opacity=".75" stroke-width="1" stroke-dasharray="0.010 1.900" stroke-linecap="round"/><path d="M-2.5 14.2H8.5" stroke="#fff" stroke-opacity=".75" stroke-width="1" stroke-dasharray="0.010 1.900" stroke-linecap="round"/><path d="M23.5 14.2H34.5" stroke="#fff" stroke-opacity=".75" stroke-width="1" stroke-dasharray="0.010 1.900" stroke-linecap="round"/><path d="M-2.5 16H8.5" stroke="#fff" stroke-opacity=".75" stroke-width="1" stroke-dasharray="0.010 1.900" stroke-linecap="round"/><path d="M23.5 16H34.5" stroke="#fff" stroke-opacity=".75" stroke-width="1" stroke-dasharray="0.010 1.900" stroke-linecap="round"/><path d="M-2.5 17.8H8.5" stroke="#fff" stroke-opacity=".75" stroke-width="1" stroke-dasharray="0.010 1.900" stroke-linecap="round"/><path d="M23.5 17.8H34.5" stroke="#fff" stroke-opacity=".75" stroke-width="1" stroke-dasharray="0.010 1.900" stroke-linecap="round"/><path d="M-2.5 19.6H8.5" stroke="#fff" stroke-opacity=".75" stroke-width="1" stroke-dasharray="0.010 1.900" stroke-linecap="round"/><path d="M23.5 19.6H34.5" stroke="#fff" stroke-opacity=".75" stroke-width="1" stroke-dasharray="0.010 1.900" stroke-linecap="round"/></g><path d="M14.300 11.400h3.400v2.900h2.900v3.400h-2.900v2.900h-3.400v-2.900h-2.900v-3.400h2.900z" fill="#f2f2f2" transform="rotate(8 16 16)"/></svg><div class="l" style="text-align:left;padding-left:14.8px">Wunddokume…</div></div>
<div class="tile" style="left:791.38px;top:215.3px"><svg class="" style="" viewBox="0 0 32 32"><rect x="3" y="4.5" width="24.4" height="26.5" rx="1.6" fill="#8ca0bd"/><rect x="4.7" y="6.3" width="21" height="23.4" rx="1.6" fill="url(#gP)"/><path d="M8.8 8.2V5q0-1.2 1.2-1.2h2.2a3.1 3.1 0 0 1 6 0h2.2q1.2 0 1.2 1.2V8.2z" fill="#5d7699"/><circle cx="15.2" cy="3.3" r="1.1" fill="#b7c6dc"/><path d="M7 18.8V14.7a3.65 3.65 0 0 1 7.3 0V18.8z" fill="#3a6199"/><path d="M7 18.8V23.5a3.65 3.65 0 0 0 7.3 0V18.8z" fill="url(#gG)"/><rect x="8.2" y="13" width="1.6" height="4" rx=".8" fill="#7fa6d8"/><circle cx="19.6" cy="23.2" r="4.4" fill="#4a78b5"/><path d="M16.8 25.6l5.6-4.8" stroke="#e6eef8" stroke-width="1.5"/></svg><div class="l">Medikationsplan</div></div>
<div class="tile" style="left:982.1999999999999px;top:215.3px"><svg class="" style="" viewBox="0 0 32 32"><path d="M9.9 21.6L-0.6999999999999993 30.900000000000002" stroke="#3f6ba5" stroke-width="1.700" stroke-linecap="round"/><path d="M1.0 29.5L-0.6999999999999993 30.900000000000002" stroke="#8fd0e8" stroke-width="1.700" stroke-linecap="round"/><circle cx="18.5" cy="12.3" r="11.400" fill="url(#gL)" stroke="#3f6ba5" stroke-width="1.500"/><path d="M16.700 4.800Q18.500 2.800 20.300 4.800L19.500 14.600Q18.500 15.600 17.500 14.600z" fill="url(#gG)"/><circle cx="18.500" cy="19" r="2" fill="url(#gG)"/></svg><div class="l" style="text-align:left;padding-left:14.8px">Risikoassess…</div></div>
<div class="tile" style="left:1173.02px;top:215.3px"><svg class="" style="" viewBox="0 0 32 32"><path d="M9.4 21.6L-1.1999999999999993 30.900000000000002" stroke="#3f6ba5" stroke-width="1.700" stroke-linecap="round"/><path d="M0.5 29.5L-1.1999999999999993 30.900000000000002" stroke="#8fd0e8" stroke-width="1.700" stroke-linecap="round"/><circle cx="18" cy="12.3" r="11.400" fill="url(#gL)" stroke="#3f6ba5" stroke-width="1.500"/><rect x="11.300" y="7.200" width="3.600" height="12" rx=".8" fill="url(#gGl)"/><rect x="16.300" y="5.200" width="3.600" height="14" rx=".8" fill="#7fb83a"/><rect x="21.300" y="9.600" width="3.500" height="9.600" rx=".8" fill="url(#gGl)"/></svg><div class="l">Risikoskala</div></div>
<div class="tile" style="left:28.1px;top:342.6px"><svg class="" style="" viewBox="0 0 32 32"><rect x="3" y="4.5" width="24.4" height="26.5" rx="1.6" fill="#a9c9ea"/><rect x="4.7" y="6.3" width="21" height="23.4" rx="1.6" fill="url(#gP)"/><path d="M8.8 8.2V5q0-1.2 1.2-1.2h2.2a3.1 3.1 0 0 1 6 0h2.2q1.2 0 1.2 1.2V8.2z" fill="#3f6ba5"/><circle cx="15.2" cy="3.3" r="1.1" fill="#b7c6dc"/><path d="M6.5 21.5l2.5-1 2-2 2 1.5 2.5-3.5 2 2 2.5-4.5 2 2.5 1.5-3" stroke="#1e3358" stroke-width="1.3" fill="none"/><path d="M6.5 23.5l3-1 2.5 1.5 2.5-2.5 2.5 1.5 2.5-3 2.5 1.5 2-2" stroke="#a6d24e" stroke-width="1.3" fill="none"/></svg><div class="l" style="text-align:left;padding-left:14.8px">Maßnahmenpl…</div></div>
<div class="tile" style="left:218.92px;top:342.6px"><svg class="" style="" viewBox="0 0 32 32"><rect x="0.600" y="2.300" width="28.500" height="26.900" rx="1" fill="#1b2b3c"/><rect x="0.600" y="3" width="27.700" height="25.400" rx=".8" fill="url(#gG)"/><rect x="20.300" y="10.800" width="10.900" height="8.400" rx="3" fill="url(#gB)" stroke="#2f588f" stroke-width=".6"/><text x="11.600" y="22.400" font-family="Liberation Sans" font-weight="bold" font-size="19.500" fill="#fff" text-anchor="middle">€</text></svg><div class="l">Rechnungen</div></div>
<div class="tile" style="left:409.74px;top:342.6px"><svg class="" style="" viewBox="0 0 32 32"><rect x="1.100" y="0.400" width="29.500" height="6.200" rx="1.600" fill="#86bd35"/><rect x="3" y="2.300" width="25.700" height="2.200" rx=".8" fill="none" stroke="#6a9e24" stroke-width=".7"/><path fill-rule="evenodd" d="M5.500 4.500H26.100V28.800Q26.100 30.400 24.500 30.400H7.100Q5.500 30.400 5.500 28.800zM15.800 9.700a7.500 7.500 0 1 0 .01 0z" fill="url(#gG)"/><circle cx="15.800" cy="17.200" r="7.500" fill="#fff" fill-opacity=".12"/><text x="15.500" y="21.300" font-family="Liberation Sans" font-weight="bold" font-size="11.500" fill="#3c68a3" text-anchor="middle">€</text></svg><div class="l" style="text-align:left;padding-left:14.8px">Zahlungseing…</div></div>
<div class="tile" style="left:600.5600000000001px;top:342.6px"><svg class="" style="" viewBox="0 0 32 32"><path d="M0.800 5H16L17.600 2.900H29.200Q30.100 2.900 30.100 3.800V14H0.800z" fill="#4a80bd" stroke="#8c8c8c" stroke-width=".7"/><rect x="1.600" y="6.200" width="27.600" height="7" fill="url(#gGl)"/><radialGradient id="gPm" cx=".3" cy=".5" r=".7"><stop offset="0" stop-color="#6c97cf"/><stop offset="1" stop-color="#38619e"/></radialGradient><path d="M1.100 10.800H10.800L12.800 13.200H29.400Q30.300 13.200 30.300 14.100V28.300Q30.300 29.200 29.400 29.200H1.100Q0.200 29.200 0.200 28.300V11.700Q0.200 10.800 1.100 10.800z" fill="url(#gPm)" stroke="#8c8c8c" stroke-width=".7"/><path d="M18.300 14.800h4.700v3.700h3.700v4.700h-3.700v3.700h-4.700v-3.700h-3.700v-4.700h3.700z" fill="url(#gG)"/></svg><div class="l">Pflegemappe</div></div>
<div class="tile" style="left:791.38px;top:342.6px"><svg class="" style="" viewBox="0 0 32 32"><path d="M4.80 31.30Q4.80 24.00 10.80 22.30L14.80 21.80L18.80 22.30Q24.80 24.00 24.80 31.30z" fill="url(#gB)"/><path d="M10.80 22.30L14.80 30.50L18.80 22.30L16.80 21.50H12.80z" fill="#fff"/><path d="M13.00 22.30L14.80 29.50L16.60 22.30z" fill="#8fc63f"/><rect x="13.40" y="18.50" width="2.80" height="4.00" fill="#c9c9c9"/><ellipse cx="14.80" cy="10.80" rx="8.10" ry="8.30" fill="#1b2b3c"/><path d="M8.40 11.20H21.20Q21.60 20.80 14.80 20.80Q8.00 20.80 8.40 11.20z" fill="url(#gF)"/><path d="M9.40 3.20Q14.80 0.60 20.20 3.20L19.40 8.60Q14.80 7.20 10.20 8.60z" fill="#f6f7f9" stroke="#6f7f93" stroke-width="0.60"/><path d="M14.10 2.80h1.40v1.40h1.40v1.40h-1.40v1.40h-1.40v-1.40h-1.40v-1.40h1.40z" fill="#1b2b3c"/></svg><div class="l">Mitarbeiter</div></div>
<div class="tile" style="left:982.1999999999999px;top:342.6px"><svg class="" style="" viewBox="0 0 32 32"><rect x="0.400" y="10" width="29.200" height="20.600" fill="url(#gB)" stroke="#7d8ea5" stroke-width=".4"/><rect x="0.400" y="3.300" width="29.200" height="7.300" fill="url(#gGl)"/><circle cx="4.30" cy="6.200" r=".75" fill="#2d4a16"/><path d="M4.30 6.300C2.00 7 1.70 1.700 4.00 1.800" stroke="#fff" stroke-width="1.300" fill="none" stroke-linecap="round"/><circle cx="7.80" cy="6.200" r=".75" fill="#2d4a16"/><path d="M7.80 6.300C5.50 7 5.20 1.700 7.50 1.800" stroke="#fff" stroke-width="1.300" fill="none" stroke-linecap="round"/><circle cx="11.30" cy="6.200" r=".75" fill="#2d4a16"/><path d="M11.30 6.300C9.00 7 8.70 1.700 11.00 1.800" stroke="#fff" stroke-width="1.300" fill="none" stroke-linecap="round"/><circle cx="14.80" cy="6.200" r=".75" fill="#2d4a16"/><path d="M14.80 6.300C12.50 7 12.20 1.700 14.50 1.800" stroke="#fff" stroke-width="1.300" fill="none" stroke-linecap="round"/><circle cx="18.30" cy="6.200" r=".75" fill="#2d4a16"/><path d="M18.30 6.300C16.00 7 15.70 1.700 18.00 1.800" stroke="#fff" stroke-width="1.300" fill="none" stroke-linecap="round"/><circle cx="21.80" cy="6.200" r=".75" fill="#2d4a16"/><path d="M21.80 6.300C19.50 7 19.20 1.700 21.50 1.800" stroke="#fff" stroke-width="1.300" fill="none" stroke-linecap="round"/><circle cx="25.30" cy="6.200" r=".75" fill="#2d4a16"/><path d="M25.30 6.300C23.00 7 22.70 1.700 25.00 1.800" stroke="#fff" stroke-width="1.300" fill="none" stroke-linecap="round"/><circle cx="28.80" cy="6.200" r=".75" fill="#2d4a16"/><path d="M28.80 6.300C26.50 7 26.20 1.700 28.50 1.800" stroke="#fff" stroke-width="1.300" fill="none" stroke-linecap="round"/><rect x="10.90" y="12.50" width="2.700" height="1.700" fill="#10202f"/><rect x="14.45" y="12.50" width="2.700" height="1.700" fill="#10202f"/><rect x="18.00" y="12.50" width="2.700" height="1.700" fill="#10202f"/><rect x="21.55" y="12.50" width="2.700" height="1.700" fill="#10202f"/><rect x="25.10" y="12.50" width="2.700" height="1.700" fill="#10202f"/><rect x="3.80" y="15.95" width="2.700" height="1.700" fill="#10202f"/><rect x="7.35" y="15.95" width="2.700" height="1.700" fill="#10202f"/><rect x="10.90" y="15.95" width="2.700" height="1.700" fill="#10202f"/><rect x="14.45" y="15.95" width="2.700" height="1.700" fill="#10202f"/><rect x="18.00" y="15.95" width="2.700" height="1.700" fill="#10202f"/><rect x="21.55" y="15.95" width="2.700" height="1.700" fill="#10202f"/><rect x="25.10" y="15.95" width="2.700" height="1.700" fill="#10202f"/><rect x="3.80" y="19.40" width="2.700" height="1.700" fill="#10202f"/><rect x="7.35" y="19.40" width="2.700" height="1.700" fill="#10202f"/><rect x="10.90" y="19.40" width="2.700" height="1.700" fill="#10202f"/><rect x="14.45" y="19.40" width="2.700" height="1.700" fill="#10202f"/><rect x="18.00" y="19.40" width="2.700" height="1.700" fill="#10202f"/><rect x="21.55" y="19.40" width="2.700" height="1.700" fill="#10202f"/><rect x="25.10" y="19.40" width="2.700" height="1.700" fill="#10202f"/><rect x="3.80" y="22.85" width="2.700" height="1.700" fill="#10202f"/><rect x="7.35" y="22.85" width="2.700" height="1.700" fill="#10202f"/><rect x="10.90" y="22.85" width="2.700" height="1.700" fill="#10202f"/><rect x="14.45" y="22.85" width="2.700" height="1.700" fill="#10202f"/><rect x="18.00" y="22.85" width="2.700" height="1.700" fill="#10202f"/><rect x="21.55" y="22.85" width="2.700" height="1.700" fill="#10202f"/><rect x="25.10" y="22.85" width="2.700" height="1.700" fill="#10202f"/><rect x="3.80" y="26.30" width="2.700" height="1.700" fill="#10202f"/><rect x="7.35" y="26.30" width="2.700" height="1.700" fill="#10202f"/><rect x="10.90" y="26.30" width="2.700" height="1.700" fill="#10202f"/></svg><div class="l">Dienstplan</div></div>
<div class="tile" style="left:1173.02px;top:342.6px"><svg class="" style="" viewBox="0 0 32 32"><rect x="1" y="6.700" width="8.700" height="8.700" fill="#fff" fill-opacity=".12" stroke="#8fc63f" stroke-width="1.700"/><path d="M3.300 10.300L5.900 13.800L12.700 2.200" stroke="#8fc63f" stroke-width="1.900" fill="none"/><rect x="13" y="9" width="17.200" height="3.700" rx="1.700" fill="url(#gGl)"/><rect x="1.100" y="18.900" width="8.400" height="8.400" fill="#fff" stroke="#3f6ba5" stroke-width="1.700"/><linearGradient id="gTb" x1="0" y1="0" x2="1" y2="0"><stop offset="0" stop-color="#3f6ba5"/><stop offset=".5" stop-color="#7ea6d6"/><stop offset="1" stop-color="#3f6ba5"/></linearGradient><rect x="13" y="21.100" width="17.200" height="3.700" rx="1" fill="url(#gTb)"/></svg><div class="l">Tourenplan</div></div>
<div class="tile" style="left:28.1px;top:469.9px"><svg class="" style="" viewBox="0 0 40 40"><path d="M5.700 40V13Q5.700 4.400 14 4.400H26Q34 4.400 34 13V40z" fill="#fff" stroke="#2b3d52" stroke-width=".9"/></svg><div class="l"></div></div>
<div class="tile" style="left:218.92px;top:469.9px"><svg class="" style="" viewBox="0 0 40 40"><path d="M1.300 6H21L22.500 3.500H37Q38.300 3.500 38.300 4.800V40H1.300z" fill="#4a80bd" stroke="#9aa3ad" stroke-width=".8"/><rect x="2" y="8" width="35.500" height="32" fill="url(#gGl)"/><rect x="2" y="6.800" width="20" height="1.600" fill="#cfe6f4"/></svg><div class="l"></div></div>
<div class="tile" style="left:409.74px;top:469.9px"><svg class="" style="" viewBox="0 0 40 40"><path d="M1.100 40V15Q1.100 9.600 6.500 9.600H11.500V40z" fill="#4a80bd"/><path d="M38.300 40V15Q38.300 9.600 33 9.600H29.400V40z" fill="#4a80bd"/><rect x="11.500" y="2.900" width="17.900" height="38" fill="#1b2b3c"/></svg><div class="l"></div></div>
</div>
<div class="sb" style="left:1486px;top:16.5px;width:28px;height:485px"><div class="up" style="left:7px;top:11.5px"></div><div class="th" style="left:1.5px;top:28px;width:25.5px;height:353px"></div><div class="dn" style="left:7px;top:467px"></div></div>
<div class="sec" style="top:510px"><svg style="position:absolute;left:8px;top:9.7px;width:23.62px;height:27px" viewBox="0 0 448 512"><path fill="#e9eef8" d="M0 464c0 26.500 21.500 48 48 48h352c26.500 0 48-21.500 48-48V192H0v272zm320-196c0-6.600 5.400-12 12-12h40c6.600 0 12 5.400 12 12v40c0 6.600-5.400 12-12 12h-40c-6.600 0-12-5.400-12-12v-40zm0 128c0-6.600 5.400-12 12-12h40c6.600 0 12 5.400 12 12v40c0 6.600-5.400 12-12 12h-40c-6.600 0-12-5.400-12-12v-40zM192 268c0-6.600 5.400-12 12-12h40c6.600 0 12 5.400 12 12v40c0 6.600-5.400 12-12 12h-40c-6.600 0-12-5.400-12-12v-40zm0 128c0-6.600 5.400-12 12-12h40c6.600 0 12 5.400 12 12v40c0 6.600-5.400 12-12 12h-40c-6.600 0-12-5.400-12-12v-40zM64 268c0-6.600 5.400-12 12-12h40c6.600 0 12 5.400 12 12v40c0 6.600-5.400 12-12 12H76c-6.600 0-12-5.400-12-12v-40zm0 128c0-6.600 5.400-12 12-12h40c6.600 0 12 5.400 12 12v40c0 6.600-5.400 12-12 12H76c-6.600 0-12-5.400-12-12v-40zM400 64h-48V16c0-8.800-7.200-16-16-16h-32c-8.800 0-16 7.200-16 16v48H160V16c0-8.800-7.200-16-16-16h-32c-8.800 0-16 7.200-16 16v48H48C21.500 64 0 85.500 0 112v48h448v-48c0-26.500-21.500-48-48-48z"/></svg><div class="t">Aufgaben/Termine</div><svg style="position:absolute;left:1406.2px;top:9.2px;width:27.00px;height:27px" viewBox="0 0 512 512"><path fill="#e9eef8" d="M487.400 315.700l-42.600-24.600c4.300-23.200 4.300-47 0-70.200l42.600-24.600c4.900-2.800 7.100-8.600 5.500-14-11.100-35.600-30-67.800-54.700-94.600-3.800-4.100-10-5.100-14.800-2.300L380.800 110c-17.900-15.400-38.500-27.300-60.800-35.100V25.800c0-5.600-3.900-10.500-9.400-11.700-36.700-8.200-74.300-7.800-109.200 0-5.500 1.200-9.400 6.100-9.400 11.700V75c-22.200 7.900-42.800 19.800-60.800 35.100L88.700 85.500c-4.900-2.800-11-1.900-14.800 2.300-24.700 26.700-43.600 58.900-54.700 94.600-1.700 5.400.6 11.200 5.500 14L67.300 221c-4.300 23.200-4.300 47 0 70.200l-42.600 24.600c-4.900 2.800-7.100 8.600-5.500 14 11.100 35.600 30 67.800 54.700 94.600 3.800 4.100 10 5.100 14.800 2.300l42.600-24.600c17.900 15.400 38.500 27.300 60.800 35.100v49.200c0 5.600 3.900 10.500 9.400 11.700 36.700 8.200 74.300 7.800 109.200 0 5.500-1.200 9.400-6.100 9.400-11.700v-49.200c22.200-7.900 42.800-19.800 60.800-35.100l42.600 24.600c4.900 2.800 11 1.900 14.800-2.300 24.700-26.700 43.600-58.900 54.700-94.600 1.500-5.500-.7-11.300-5.600-14.100zM256 336c-44.100 0-80-35.900-80-80s35.900-80 80-80 80 35.900 80 80-35.900 80-80 80z"/></svg><svg style="position:absolute;left:1442.6px;top:9.4px;width:27.00px;height:27px" viewBox="0 0 512 512"><path fill="#e9eef8" d="M370.720 133.280C339.458 104.008 298.888 87.962 255.848 88c-77.458.068-144.328 53.178-162.791 126.850-1.344 5.363-6.122 9.150-11.651 9.150H24.103c-7.498 0-13.194-6.807-11.807-14.176C33.933 94.924 134.813 8 256 8c66.448 0 126.791 26.136 171.315 68.685L463.030 40.970C478.149 25.851 504 36.559 504 57.941V192c0 13.255-10.745 24-24 24H345.941c-21.382 0-32.090-25.851-16.971-40.971l41.750-41.749zM32 296h134.059c21.382 0 32.090 25.851 16.971 40.971l-41.750 41.750c31.262 29.273 71.835 45.319 114.876 45.280 77.418-.07 144.315-53.144 162.787-126.849 1.344-5.363 6.122-9.150 11.651-9.150h57.304c7.498 0 13.194 6.807 11.807 14.176C478.067 417.076 377.187 504 256 504c-66.448 0-126.791-26.136-171.315-68.685L48.970 471.030C33.851 486.149 8 475.441 8 454.059V320c0-13.255 10.745-24 24-24z"/></svg><svg style="position:absolute;left:1481px;top:9.7px;width:27.00px;height:27px" viewBox="0 0 512 512"><path fill="#e9eef8" d="M448 192V77.250c0-8.490-3.370-16.620-9.370-22.630L393.370 9.370c-6-6-14.140-9.370-22.630-9.370H96C78.330 0 64 14.330 64 32v160c-35.350 0-64 28.650-64 64v112c0 8.840 7.160 16 16 16h48v96c0 17.670 14.330 32 32 32h320c17.670 0 32-14.330 32-32v-96h48c8.840 0 16-7.160 16-16V256c0-35.350-28.650-64-64-64zm-64 256H128v-96h256v96zm0-224H128V64h192v48c0 8.840 7.160 16 16 16h48v96zm48 72c-13.250 0-24-10.750-24-24 0-13.260 10.750-24 24-24s24 10.740 24 24c0 13.250-10.750 24-24 24z"/></svg></div>
<div class="gh" style="top:556px"><div class="c" style="left:0px;width:161px;padding-left:17px">Termin</div><div class="c" style="left:161px;width:204px;padding-left:15.7px">Bereich</div><div class="c" style="left:365px;width:305px;padding-left:15.7px">Betreff</div><div class="c" style="left:670px;width:406px;padding-left:15.7px">Betrifft</div><div class="c" style="left:1076px;width:410px;padding-left:15.7px">Mitarbeiter</div></div>
<div class="gr" style="top:614.70px;"><div class="c" style="left:28.9px;letter-spacing:-0.22px;">22.05.2021</div><div class="c" style="left:177.3px;">Pflegeplanung</div><div class="c" style="left:381.3px;">Pflegeplanung evaluieren</div><div class="c" style="left:686px;">Herr Mustermann Max</div><div class="c" style="left:1092.6px;"></div></div>
<div class="gr alt" style="top:669.53px;"><div class="c" style="left:28.9px;letter-spacing:-0.22px;">01.06.2021</div><div class="c" style="left:177.3px;">Aufgaben</div><div class="c" style="left:381.3px;"></div><div class="c" style="left:686px;"></div><div class="c" style="left:1092.6px;"></div></div>
<div class="gr" style="top:724.36px;"><div class="c" style="left:28.9px;letter-spacing:-0.22px;">29.06.2021</div><div class="c" style="left:177.3px;">Einsatz nach S…</div><div class="c" style="left:381.3px;">Einsatz ist fällig.</div><div class="c" style="left:686px;">Wurfel Andrea</div><div class="c" style="left:1092.6px;"></div></div>
<div class="gr alt" style="top:779.19px;"><div class="c" style="left:28.9px;letter-spacing:-0.22px;">08.07.2021</div><div class="c" style="left:177.3px;">Verordnung</div><div class="c" style="left:381.3px;">Folgeverordnung beantra…</div><div class="c" style="left:686px;">Herr Mustermann Max</div><div class="c" style="left:1092.6px;"></div></div>
<div class="gr" style="top:834.02px;"><div class="c" style="left:28.9px;letter-spacing:-0.22px;">17.07.2021</div><div class="c" style="left:177.3px;">Aufgaben</div><div class="c" style="left:381.3px;"></div><div class="c" style="left:686px;">Herr Klein Groß</div><div class="c" style="left:1092.6px;">Aachen Johanna</div></div>
<div class="gr alt" style="top:888.85px;"><div class="c" style="left:28.9px;letter-spacing:-0.22px;">20.07.2021</div><div class="c" style="left:177.3px;">Verordnung</div><div class="c" style="left:381.3px;">Folgeverordnung beantra…</div><div class="c" style="left:686px;">Herr Friedmann Ulrich</div><div class="c" style="left:1092.6px;"></div></div>
<div class="gr" style="top:943.68px;height:59.33px;"><svg class="" style="position:absolute;left:10px;top:6.3px;width:40px;height:40px" viewBox="0 0 40 40"><linearGradient id="gBell" x1="0" y1="0" x2="1" y2=".3"><stop offset="0" stop-color="#f1de6c"/><stop offset=".45" stop-color="#e9c83c"/><stop offset="1" stop-color="#d7a62a"/></linearGradient><circle cx="29.400" cy="8.200" r="3.200" fill="#e6c034"/><path d="M27.500 9.500C20 10 11 14 6.800 18.500C6 22 9 26.500 13 29.500C16 31.800 20 33.200 23 32.600C27 31.500 30.300 27 30.300 22C30.300 17 29.500 13 27.500 9.500z" fill="url(#gBell)"/><path d="M8 19C12 16.500 17 17.500 21 21.500C25 25.500 25.500 29.500 23.500 32.300C20 33 16 31.500 13 29.500C9.500 26.800 7 22.500 8 19z" fill="#e0bb3a"/><ellipse cx="17.300" cy="24.800" rx="6.800" ry="4.300" transform="rotate(42 17.300 24.800)" fill="#c2922a"/><ellipse cx="16.600" cy="24" rx="3" ry="2.400" transform="rotate(42 16.600 24)" fill="#f2e28a"/><path d="M12 15.500C15 13.500 19 12.300 23 12" stroke="#f6eaa0" stroke-width="1.400" fill="none" stroke-linecap="round" opacity=".7"/></svg><div class="c" style="left:50px;top:4px">22.07.2…</div><div class="c" style="left:177.3px;">Aufgaben</div><div class="c" style="left:381.3px;">Medikamente betsellen</div><div class="c" style="left:686px;">Herr Herzog Torsten</div><div class="c" style="left:1092.6px;">Eisenberg Heike</div></div>
<div class="gr alt" style="top:1003.01px;"><div class="c" style="left:28.9px;letter-spacing:-0.22px;"></div><div class="c" style="left:177.3px;"></div><div class="c" style="left:381.3px;"></div><div class="c" style="left:686px;"></div><div class="c" style="left:1092.6px;"></div></div>
<div class="sb" style="left:1494px;top:614px;width:28px;height:398px"><div class="up" style="left:7px;top:11px"></div><div class="th" style="left:1.5px;top:28px;width:25.5px;height:305px"></div><div class="dn" style="left:7px;top:380px"></div></div>
<div class="sec" style="top:1012px"><svg style="position:absolute;left:8px;top:10px;width:23.62px;height:27px" viewBox="0 0 448 512"><path fill="#e9eef8" d="M448 384c-28.020 0-31.260-32-74.500-32-43.430 0-46.825 32-74.750 32-27.695 0-31.454-32-74.750-32-42.842 0-47.218 32-74.500 32-28.148 0-31.202-32-74.750-32-43.547 0-46.653 32-74.750 32v-80c0-26.500 21.500-48 48-48h16V112h64v144h64V112h64v144h64V112h64v144h16c26.500 0 48 21.500 48 48v80zm0 128H0v-96c43.356 0 46.767-32 74.750-32 27.951 0 31.253 32 74.750 32 42.843 0 47.217-32 74.500-32 28.148 0 31.201 32 74.750 32 43.357 0 46.767-32 74.750-32 27.488 0 31.252 32 74.500 32v96zM96 96c-17.750 0-32-14.250-32-32 0-31 32-23 32-64 12 0 32 29.500 32 56s-14.250 40-32 40zm128 0c-17.750 0-32-14.250-32-32 0-31 32-23 32-64 12 0 32 29.500 32 56s-14.250 40-32 40zm128 0c-17.750 0-32-14.250-32-32 0-31 32-23 32-64 12 0 32 29.500 32 56s-14.250 40-32 40z"/></svg><div class="t">Geburtstage</div><svg style="position:absolute;left:1481px;top:10.3px;width:27.00px;height:27px" viewBox="0 0 512 512"><path fill="#e9eef8" d="M448 192V77.250c0-8.490-3.370-16.620-9.370-22.630L393.370 9.370c-6-6-14.140-9.370-22.630-9.370H96C78.330 0 64 14.330 64 32v160c-35.350 0-64 28.650-64 64v112c0 8.840 7.160 16 16 16h48v96c0 17.670 14.330 32 32 32h320c17.670 0 32-14.330 32-32v-96h48c8.840 0 16-7.160 16-16V256c0-35.350-28.650-64-64-64zm-64 256H128v-96h256v96zm0-224H128V64h192v48c0 8.840 7.160 16 16 16h48v96zm48 72c-13.250 0-24-10.750-24-24 0-13.260 10.750-24 24-24s24 10.740 24 24c0 13.250-10.750 24-24 24z"/></svg></div>
<div class="gh" style="top:1058px"><div class="c" style="left:0px;width:606.3px;padding-left:17px">Name</div><div class="c" style="left:606.3px;width:297.7px;padding-left:15.7px">Geburtsdatum</div><div class="c" style="left:904px;width:311px;padding-left:15.7px">Jahre</div><div class="c" style="left:1215px;width:299px;padding-left:15.7px">Art</div></div>
<div class="sb" style="left:1523px;top:8px;width:28px;height:1086px"><div class="up" style="left:7px;top:11px"></div><div class="th" style="left:1px;top:28px;width:25.5px;height:847.7px"></div><div class="dn" style="left:7px;top:1076px"></div></div>
</div>
<div id="tb"><div class="abs" style="left:0;top:13px;width:84px;height:77px;background:#f0f0f0"></div>
<svg class="" style="position:absolute;left:15px;top:24.5px;width:54px;height:54px" viewBox="0 0 54 54"><path d="M15.500 8C10.500 7 8.500 13 10.500 19C11.200 21.500 11.500 23 12.800 24.500C15 22 15.500 18 14.800 14z" fill="#151515"/><path d="M21 21.500C14 23.500 9.500 31 9.800 40C10.200 47.500 14.500 52.200 22 52.200C30 52.200 34.500 47 34.500 40C34.500 30 29 23 21 21.500z" fill="url(#gG)"/><path d="M17 22.500L21.500 19.500L29 27L26.500 31.500z" fill="#fff"/><path d="M26.500 31.500L29 27L31 28.500z" fill="#e6e6e6"/><ellipse cx="27.800" cy="16.800" rx="6.300" ry="7" fill="url(#gF)"/><path d="M31 21.500l3 .8-1.500 1.500z" fill="#ddd"/><path d="M15 10C15 4.500 20 2 25.500 2.600C31 3 34.500 6 33.800 9.800C32 9.500 30 10.500 27.500 10.800C26 11 25.800 13.500 24.500 14.500C23 13.500 21.800 14.500 22.300 16.500C22.600 17.800 23.500 18.500 23 20C20 19 15.500 16 15 10z" fill="url(#gH)"/><linearGradient id="gSd" x1="0" y1="0" x2="1" y2=".6"><stop offset="0" stop-color="#a7d0ee"/><stop offset="1" stop-color="#3a70b2"/></linearGradient><path d="M32.300 23.800L44.500 35L44 38.500L33.500 52.200L19.800 40.500z" fill="url(#gSd)" stroke="#5f8fca" stroke-width=".5"/><path d="M41.500 33.500l3 1.500-.5 3z" fill="#d5e6f6"/><path d="M26.700 46.300L33 40.800L38 46L32.500 52.600z" fill="#f7f9fc"/><path d="M30 45.200l5 3.500M34.300 43.800l-3.500 5.800" stroke="#3f6ba5" stroke-width="1.300"/><path d="M28 33C31 31 33 33 34 36C35.500 40 38 42 41 41" fill="none" stroke="#d5e6f6" stroke-width=".5" stroke-opacity=".8"/></svg>
<svg class="" style="position:absolute;left:15px;top:101.6px;width:54px;height:54px" viewBox="0 0 54 54"><rect x="2.150" y="16" width="45.900" height="32.200" fill="#1b2d3e" stroke="#b9c6d6" stroke-width=".5"/><rect x="2.150" y="5.700" width="46.150" height="11.200" fill="#a3c94e"/><path d="M8.00 10.300C4.20 11.500 3.60 3.800 7.40 3.900" stroke="#fff" stroke-width="2.100" fill="none" stroke-linecap="round"/><circle cx="8.60" cy="10.300" r="1.100" fill="#1b2d3e"/><path d="M14.02 10.300C10.22 11.500 9.62 3.800 13.42 3.900" stroke="#fff" stroke-width="2.100" fill="none" stroke-linecap="round"/><circle cx="14.62" cy="10.300" r="1.100" fill="#1b2d3e"/><path d="M20.04 10.300C16.24 11.500 15.64 3.800 19.44 3.900" stroke="#fff" stroke-width="2.100" fill="none" stroke-linecap="round"/><circle cx="20.64" cy="10.300" r="1.100" fill="#1b2d3e"/><path d="M26.06 10.300C22.26 11.500 21.66 3.800 25.46 3.900" stroke="#fff" stroke-width="2.100" fill="none" stroke-linecap="round"/><circle cx="26.66" cy="10.300" r="1.100" fill="#1b2d3e"/><path d="M32.08 10.300C28.28 11.500 27.68 3.800 31.48 3.900" stroke="#fff" stroke-width="2.100" fill="none" stroke-linecap="round"/><circle cx="32.68" cy="10.300" r="1.100" fill="#1b2d3e"/><path d="M38.10 10.300C34.30 11.500 33.70 3.800 37.50 3.900" stroke="#fff" stroke-width="2.100" fill="none" stroke-linecap="round"/><circle cx="38.70" cy="10.300" r="1.100" fill="#1b2d3e"/><path d="M44.12 10.300C40.32 11.500 39.72 3.800 43.52 3.900" stroke="#fff" stroke-width="2.100" fill="none" stroke-linecap="round"/><circle cx="44.72" cy="10.300" r="1.100" fill="#1b2d3e"/><rect x="18.56" y="18.90" width="5.600" height="4.900" fill="#5aaeea"/><rect x="25.79" y="18.90" width="5.600" height="4.900" fill="#ffffff"/><rect x="33.02" y="18.90" width="5.600" height="4.900" fill="#ffffff"/><rect x="40.25" y="18.90" width="5.600" height="4.900" fill="#a3c94e"/><rect x="4.10" y="25.80" width="5.600" height="4.900" fill="#5aaeea"/><rect x="11.33" y="25.80" width="5.600" height="4.900" fill="#5aaeea"/><rect x="18.56" y="25.80" width="5.600" height="4.900" fill="#5aaeea"/><rect x="25.79" y="25.80" width="5.600" height="4.900" fill="#ffffff"/><rect x="33.02" y="25.80" width="5.600" height="4.900" fill="#ffffff"/><rect x="40.25" y="25.80" width="5.600" height="4.900" fill="#a3c94e"/><rect x="4.10" y="32.70" width="5.600" height="4.900" fill="#a3c94e"/><rect x="11.33" y="32.70" width="5.600" height="4.900" fill="#a3c94e"/><rect x="18.56" y="32.70" width="5.600" height="4.900" fill="#a3c94e"/><rect x="25.79" y="32.70" width="5.600" height="4.900" fill="#a3c94e"/><rect x="33.02" y="32.70" width="5.600" height="4.900" fill="#5aaeea"/><rect x="4.10" y="39.60" width="5.600" height="4.900" fill="#5aaeea"/><rect x="11.33" y="39.60" width="5.600" height="4.900" fill="#a3c94e"/><rect x="18.56" y="39.60" width="5.600" height="4.900" fill="#5aaeea"/><rect x="25.79" y="39.60" width="5.600" height="4.900" fill="#5aaeea"/><circle cx="41.900" cy="41.600" r="9.700" fill="#9fc94c" stroke="#dfeecb" stroke-width=".9"/><path d="M35.600 42.400L39.600 47.300L47 36.500" stroke="#fff" stroke-width="2.700" fill="none" stroke-linecap="round" stroke-linejoin="round"/></svg>
<svg class="" style="position:absolute;left:15px;top:178.7px;width:54px;height:54px" viewBox="0 0 54 54"><radialGradient id="gHd" cx=".5" cy=".45" r=".6"><stop offset="0" stop-color="#82a8d8"/><stop offset="1" stop-color="#3b679f"/></radialGradient><g transform="translate(9.800 13.200) rotate(-24)"><path d="M0 0H17L22 5V30.500H0z" fill="url(#gHd)" stroke="#345c92" stroke-width=".7"/><path d="M17 0V5H22z" fill="#a9c9ea"/><rect x="11.200" y="19.800" width="10" height="10" fill="#f4f7fb"/><path d="M16.200 21.300v7M12.700 24.800h7" stroke="#34609a" stroke-width="1.600"/></g><radialGradient id="gHg" cx=".5" cy=".4" r=".6"><stop offset="0" stop-color="#c0e07a"/><stop offset=".5" stop-color="#a5cf4c"/><stop offset="1" stop-color="#86b93a"/></radialGradient><path d="M20.200 17.300C21.500 17.300 22.200 18.200 22.400 19.500L25 31.500L27.800 33.500C28.500 31 29.500 28.500 31 28C32.500 27.800 32.800 29.500 32.300 31.500L31.800 45C30 49 26 52 21 52.300C18 51 15 46.500 13 42C11.500 38 10 34 9.900 31.500C9.900 30 11.500 29.600 12.300 30.800L13.500 33L13.200 28.800C13.200 27.200 15.300 26.800 15.900 28.300L17 32L16.700 26.300C16.700 24.600 19 24.400 19.500 26L20.500 31L18.300 19.500C18.100 18.200 19 17.300 20.200 17.300z" fill="url(#gHg)"/><path d="M13.500 33l.5 2.500M17 32l.6 3M20.500 31l.8 3" stroke="#7aa935" stroke-width=".6" fill="none"/></svg>
<svg class="" style="position:absolute;left:15px;top:255.8px;width:54px;height:54px" viewBox="0 0 54 54"><rect x="7.200" y="10" width="39" height="41" rx="2.500" fill="#8ca0bd"/><rect x="10" y="12.800" width="33.400" height="35.800" rx="2.500" fill="url(#gP)"/><path d="M16 15.500V10q0-2 2-2h3.600a5 5 0 0 1 10 0h3.600q2 0 2 2V15.500z" fill="#5d7699"/><circle cx="26.600" cy="7" r="1.800" fill="#b7c6dc"/><rect x="18" y="25" width="15.500" height="15.500" fill="#e8e8e8" stroke="#8fc63f" stroke-width="3"/><path d="M21.500 30L27 36.500L39.500 16.500" stroke="#8fc63f" stroke-width="3.200" fill="none"/></svg>
<svg class="" style="position:absolute;left:15px;top:332.9px;width:54px;height:54px" viewBox="0 0 54 54"><ellipse cx="26.500" cy="28.500" rx="14.500" ry="6.500" fill="#4a78b0"/><path d="M22 22.500L26.500 28L31 22.500z" fill="#fff"/><ellipse cx="26.500" cy="9.500" rx="9.200" ry="8.300" fill="url(#gH)"/><ellipse cx="26.500" cy="14" rx="7.300" ry="8.600" fill="url(#gF)"/><path d="M2 29.500L26.500 31.500V51.500L6.500 50z" fill="url(#gG)"/><path d="M51 29.500L26.500 31.500V51.500L46.500 50z" fill="#8fc63f"/><path d="M26.500 31.500V51.500" stroke="#6a9e24" stroke-width=".8"/><path d="M7.500 40.500L14 35.500V38.500H23.500V42.500H14V45.500z" fill="#3f6ba5"/><path d="M46 40.500L39.500 35.500V38.500H30V42.500H39.500V45.500z" fill="#3f6ba5"/></svg>
<svg class="" style="position:absolute;left:15px;top:410.0px;width:54px;height:54px" viewBox="0 0 54 54"><path d="M42.500 19.500C52.500 23 52 35.500 42.500 40.500C38 43 31.500 43.500 26.500 41.500" fill="none" stroke="#3f6ba5" stroke-width="2.600"/><path d="M40 40.500L50.800 45L46 37z" fill="#3f6ba5"/><ellipse cx="22" cy="21.500" rx="20.300" ry="16.800" fill="url(#gG)"/><path d="M7 32L4.500 42.500L17 37z" fill="#86bd35"/><circle cx="11.500" cy="21.500" r="3.100" fill="#eef5e2"/><circle cx="21.300" cy="21.500" r="3.100" fill="#eef5e2"/><circle cx="31" cy="21.500" r="3.100" fill="#eef5e2"/></svg>
<svg class="" style="position:absolute;left:15px;top:487.1px;width:54px;height:54px" viewBox="0 0 32 32"><g transform="translate(1.400 1.200) scale(.925)"><path d="M0.600 11.600L15.700 0.300L30.900 11.600V18z" fill="#6a9fd8" stroke="#a9b3c2" stroke-width=".5"/><rect x="3" y="4.600" width="25.400" height="17" rx="1.800" fill="url(#gG)" stroke="#6f9f2c" stroke-width=".4"/><path d="M7.200 9.200H24.400M7.200 12.900H24.400M8 16.300H14.600" stroke="#1b2b3c" stroke-width="1.700" stroke-linecap="round"/><path d="M0.600 11.600L15.700 20.800L30.900 11.600V28.500Q30.900 29.700 29.700 29.700H1.800Q0.600 29.700 0.600 28.500z" fill="url(#gB)" stroke="#a9b3c2" stroke-width=".5"/><path d="M1 29.300L14.300 20M30.500 29.300L17.100 20" stroke="#c4cdd8" stroke-width=".6" fill="none"/></g></svg>
<svg class="" style="position:absolute;left:15px;top:564.2px;width:54px;height:54px" viewBox="0 0 54 54"><linearGradient id="gEg" x1="0" y1="0" x2="1" y2="1"><stop offset="0" stop-color="#86b040"/><stop offset=".55" stop-color="#a6c93c"/><stop offset="1" stop-color="#86b040"/></linearGradient><path d="M17 2.150L37 5.300L44.900 16L43.400 44.900L39.500 46.300L17 44z" fill="url(#gEg)"/><path d="M37.500 6.300L44.900 16L37 15.600z" fill="#a9d0ee"/><path d="M7.300 9.700H28.300L39 20.900V50.700H7.300z" fill="url(#gD)" stroke="#aeb9c8" stroke-width=".5"/><path d="M28.600 10.400V20.600H38.600z" fill="#9cc8ea"/><rect x="7.700" y="16.15" width="1.700" height="1.700" fill="#3a66a3"/><rect x="7.700" y="20.55" width="1.700" height="1.700" fill="#3a66a3"/><rect x="7.700" y="24.95" width="1.700" height="1.700" fill="#3a66a3"/><rect x="7.700" y="29.15" width="1.700" height="1.700" fill="#3a66a3"/><rect x="7.700" y="33.55" width="1.700" height="1.700" fill="#3a66a3"/><rect x="7.700" y="37.65" width="1.700" height="1.700" fill="#3a66a3"/><rect x="18.65" y="48.500" width="1.700" height="1.700" fill="#3a66a3"/><rect x="23.05" y="48.500" width="1.700" height="1.700" fill="#3a66a3"/><rect x="27.15" y="48.500" width="1.700" height="1.700" fill="#3a66a3"/><rect x="31.55" y="48.500" width="1.700" height="1.700" fill="#3a66a3"/><path d="M7.700 44.800L14.200 50H7.700z" fill="#3a66a3"/><g transform="translate(11.650 46.200) rotate(-45.300)"><rect x="0" y="-4.280" width="21.100" height="8.560" fill="url(#gG)"/><path d="M21.900 -4.280h1.600a4.280 4.280 0 0 1 0 8.560h-1.600z" fill="#3f6ba5"/><circle cx="23.800" cy="0" r="1.800" fill="#6a93c9"/></g></svg>
<svg class="" style="position:absolute;left:15px;top:641.3px;width:54px;height:54px" viewBox="0 0 54 54"><radialGradient id="gFx" cx=".55" cy=".35" r=".6"><stop offset="0" stop-color="#86a8d2"/><stop offset=".6" stop-color="#4a74ad"/><stop offset="1" stop-color="#3f689f"/></radialGradient><path d="M2.300 24Q2.300 21 5 21H8V45.600H5Q2.300 45.600 2.300 42.600Q4 33.500 2.300 24z" fill="#4673ad" stroke="#8fa9cc" stroke-width=".5"/><path d="M19 21V10.500Q19 7 22.500 7H41.400Q44.900 7 44.900 10.500V21H48.200Q51.700 21 51.700 24.500V42.400Q51.700 45.900 48.200 45.900H21.500Q18 45.900 18 42.400V24.500Q18 21.600 19 21z" fill="url(#gFx)" stroke="#a3b9d8" stroke-width=".7"/><rect x="21.400" y="9.500" width="21" height="15.100" rx="2.600" fill="#7aa1da" stroke="#a9c0de" stroke-width="1"/><path d="M23.900 12.900H39.700M23.900 17.300H32.700M23.900 21.800H35" stroke="#1b2b3c" stroke-width="1.900" stroke-linecap="round"/><rect x="7" y="19" width="9.800" height="28.600" rx="4.900" fill="url(#gB)" stroke="#8aa6c9" stroke-width=".6"/><path d="M39.400 33.800A7.300 7.300 0 1 0 38.700 38.500" fill="none" stroke="#a3c94e" stroke-width="1.900" stroke-linecap="round"/><path d="M36.600 33.200L41.300 32.300L39.300 36.600z" fill="#a3c94e"/><path d="M31.700 29.700V34.600L35.600 36.600" stroke="#a3c94e" stroke-width="1.800" fill="none" stroke-linejoin="round"/></svg>
<svg class="" style="position:absolute;left:15px;top:718.4px;width:54px;height:54px" viewBox="0 0 54 54"><path d="M5 19.500L27.500 3L50.500 19.500L27.500 37z" fill="url(#gBd)" stroke="#a9b3c2" stroke-width=".6"/><path d="M35.800 14.500A8.800 8.800 0 1 0 36.200 21" fill="none" stroke="#8fc63f" stroke-width="2.200"/><path d="M33 15h6.200l-2-5z" fill="#8fc63f"/><path d="M27.500 11.500V18L32 20.500" stroke="#8fc63f" stroke-width="2" fill="none"/><path d="M5 19.500L27.500 33L50.500 19.500V46.500Q50.500 48.500 48.500 48.500H7Q5 48.500 5 46.500z" fill="url(#gB)" stroke="#a9b3c2" stroke-width=".7"/><path d="M5.500 48L25.500 32M50 48L29.500 32" stroke="#c4cdd8" stroke-width=".9" fill="none"/></svg>
<svg class="" style="position:absolute;left:15px;top:795.5px;width:54px;height:54px" viewBox="0 0 54 54"><path d="M4.500 10.500H27L30.500 6H49Q50.500 6 50.500 7.500V30H4.500z" fill="#416fab" stroke="#8c8c8c" stroke-width=".8"/><rect x="6.500" y="12.500" width="41.500" height="9" fill="url(#gGl)"/><path d="M4.700 16.500H21.500L25 20H49.300Q50.800 20 50.800 21.500V43.500Q50.800 45.300 49 45.300H5Q3.200 45.300 3.200 43.500V18Q3.200 16.500 4.700 16.500z" fill="url(#gB)" stroke="#8c8c8c" stroke-width=".9"/></svg>
</div>
</body></html>
